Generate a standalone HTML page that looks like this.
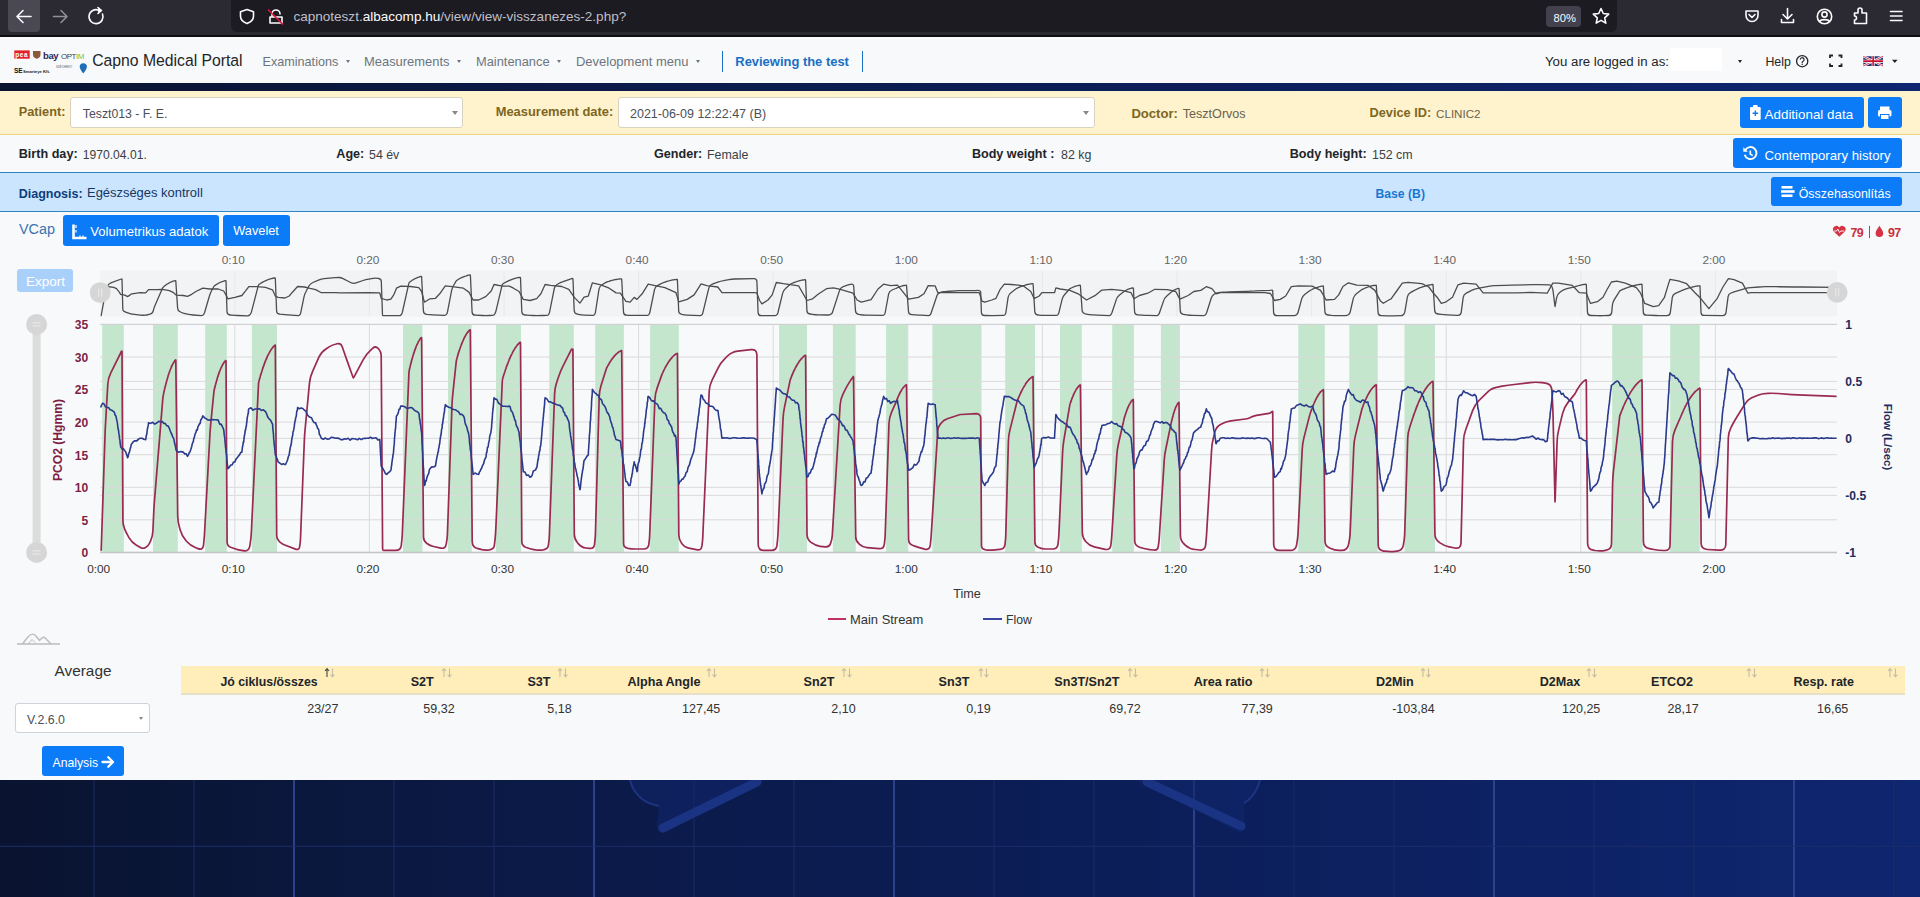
<!DOCTYPE html>
<html><head><meta charset="utf-8"><title>Capno Medical Portal</title>
<style>
html,body{margin:0;padding:0;}
body{width:1920px;height:897px;position:relative;overflow:hidden;background:#0b1838;font-family:"Liberation Sans", sans-serif;}
.t{position:absolute;white-space:nowrap;line-height:1;}
</style></head><body>
<div style="position:absolute;left:0px;top:0px;width:1920px;height:36px;background:#2b2a33;"></div>
<div style="position:absolute;left:0px;top:35px;width:1920px;height:2px;background:#0f0f12;"></div>
<div style="position:absolute;left:8px;top:0px;width:32px;height:32px;background:#4a4953;border-radius:0 0 4px 4px;"></div>
<div style="position:absolute;left:231px;top:0px;width:1386px;height:31.5px;background:#1c1b22;border-radius:0 0 6px 6px;"></div>
<div style="position:absolute;left:1546px;top:6px;width:35px;height:21px;background:#42414d;border-radius:4px;"></div>
<svg style="position:absolute;left:0;top:0" width="1920" height="36" viewBox="0 0 1920 36">
<g fill="none" stroke="#fbfbfe" stroke-width="1.6" stroke-linecap="round" stroke-linejoin="round">
<path d="M31 16.5H17.5M23 10.5l-6 6 6 6"/>
<path d="M67 16.5H53.5M61 10.5l6 6-6 6" stroke="#8f8f9d"/>
<path d="M102.5 14A7 7 0 1 1 99 10.3"/><path d="M98 7.5l3.5 3-3.5 3" fill="#fbfbfe"/>
<path d="M247 9.5l6.5 2.3v4.5c0 3.5-3 6-6.5 7.3-3.5-1.3-6.5-3.8-6.5-7.3v-4.5z"/>
<path d="M270 17h12v6h-12z M272 17v-3a4 4 0 0 1 8 0"/>
<path d="M1601 8.5l2.3 5 5.4.6-4 3.7 1.1 5.3-4.8-2.7-4.8 2.7 1.1-5.3-4-3.7 5.4-.6z"/>
<path d="M1746 11h12v4.5a6 6 0 0 1-12 0z M1749 14.5l3 3 3-3"/>
<path d="M1787.5 8.5v10M1783 14.5l4.5 4.5 4.5-4.5M1781.5 19.5v3h12v-3"/>
<circle cx="1824.5" cy="16.5" r="7.2"/><circle cx="1824.5" cy="14.5" r="2.6"/><path d="M1819.5 21.5c1.5-2.5 8.5-2.5 10 0"/>
<path d="M1854.5 13h3.5v-3a2 2 0 0 1 4 0v3h4.5v10.5h-12v-3.5a2 2 0 0 0 0-4z"/>
<path d="M1890.5 11.5h11.5M1890.5 16h11.5M1890.5 20.5h11.5"/>
</g>
<path d="M268 9.5l15 15" stroke="#e3173e" stroke-width="1.6"/>
</svg>
<div class="t" style="left:293.4px;top:10.2px;font-size:13.55px;color:#bfbfc9;">capnoteszt.<span style="color:#fbfbfe">albacomp.hu</span>/view/view-visszanezes-2.php?</div>
<div class="t" style="left:1553.50px;top:12.82px;font-size:11.2px;font-weight:400;color:#fbfbfe;">80%</div>
<div style="position:absolute;left:0px;top:37px;width:1920px;height:46px;background:#f8f9fa;"></div>
<svg style="position:absolute;left:12px;top:48px" width="80" height="28" viewBox="12 48 80 28">
<rect x="14.3" y="50.4" width="15.4" height="8.3" fill="#e3202a"/>
<text x="15.3" y="57.0" font-family="Liberation Sans" font-weight="700" font-size="6.4" fill="#fff" letter-spacing="0.6">pea</text>
<path d="M33 51h7.5v4c0 2-2 3.5-3.75 3.8-1.75-.3-3.75-1.8-3.75-3.8z" fill="#8a5a3a"/>
<text x="43" y="58.6" font-family="Liberation Sans" font-weight="700" font-size="9.5" fill="#2a2a5a" letter-spacing="-0.4">bay</text>
<text x="61" y="58.5" font-family="Liberation Sans" font-size="8" fill="#444" letter-spacing="-0.5">OPT<tspan fill="#7cc242">IM</tspan></text>
<text x="14" y="73" font-family="Liberation Sans" font-weight="700" font-size="6.5" fill="#111">SE</text>
<text x="23" y="72.6" font-family="Liberation Sans" font-weight="700" font-size="4.2" fill="#222">Smarteye Kft.</text>
<text x="56" y="68" font-family="Liberation Sans" font-size="2.8" fill="#555">SZÉCHENYI</text>
<path d="M83.3 63.2a3.6 3.6 0 0 1 3.6 3.6c0 2.5-3.6 6.7-3.6 6.7s-3.6-4.2-3.6-6.7a3.6 3.6 0 0 1 3.6-3.6z" fill="#1f6fb8"/>
</svg>
<div class="t" style="left:92.20px;top:53.48px;font-size:15.74px;font-weight:400;color:#212529;">Capno Medical Portal</div>
<div class="t" style="left:262.50px;top:55.91px;font-size:12.63px;font-weight:400;color:#6c757d;">Examinations</div>
<div style="position:absolute;left:345.6px;top:59.8px;width:0;height:0;border-left:2.6px solid transparent;border-right:2.6px solid transparent;border-top:3.2px solid #6c757d"></div>
<div class="t" style="left:364.00px;top:55.65px;font-size:12.93px;font-weight:400;color:#6c757d;">Measurements</div>
<div style="position:absolute;left:456.6px;top:59.8px;width:0;height:0;border-left:2.6px solid transparent;border-right:2.6px solid transparent;border-top:3.2px solid #6c757d"></div>
<div class="t" style="left:476.00px;top:55.72px;font-size:12.85px;font-weight:400;color:#6c757d;">Maintenance</div>
<div style="position:absolute;left:556.7px;top:59.8px;width:0;height:0;border-left:2.6px solid transparent;border-right:2.6px solid transparent;border-top:3.2px solid #6c757d"></div>
<div class="t" style="left:576.00px;top:55.62px;font-size:12.97px;font-weight:400;color:#6c757d;">Development menu</div>
<div style="position:absolute;left:695.6px;top:59.8px;width:0;height:0;border-left:2.6px solid transparent;border-right:2.6px solid transparent;border-top:3.2px solid #6c757d"></div>
<div style="position:absolute;left:721.5px;top:51px;width:1.5px;height:21px;background:#1a73c8;"></div>
<div class="t" style="left:735.30px;top:55.64px;font-size:12.95px;font-weight:700;color:#1a6fc4;">Reviewing the test</div>
<div style="position:absolute;left:861.5px;top:51px;width:1.5px;height:21px;background:#1a73c8;"></div>
<div class="t" style="left:1545.00px;top:55.38px;font-size:13.25px;font-weight:400;color:#212529;">You are logged in as:</div>
<div style="position:absolute;left:1670px;top:48.3px;width:52px;height:22.900000000000006px;background:#ffffff;"></div>
<div style="position:absolute;left:1737.5px;top:59.8px;width:0;height:0;border-left:2.8px solid transparent;border-right:2.8px solid transparent;border-top:3.3px solid #212529"></div>
<div class="t" style="left:1765.40px;top:56.15px;font-size:12.35px;font-weight:400;color:#212529;">Help</div>
<svg style="position:absolute;left:1790px;top:50px" width="130" height="24" viewBox="1790 50 130 24">
<circle cx="1802.2" cy="61.2" r="5.6" fill="none" stroke="#212529" stroke-width="1.3"/>
<path d="M1800.3 59.6a1.9 1.9 0 1 1 2.8 1.7c-.6.3-.9.7-.9 1.3v.5" fill="none" stroke="#212529" stroke-width="1.2"/>
<circle cx="1802.2" cy="64.3" r=".75" fill="#212529"/>
<path d="M1830 58v-2.5h3M1838.5 55.5h3v2.5M1841.5 63.5v2.5h-3M1833 66h-3v-2.5" fill="none" stroke="#212529" stroke-width="1.8"/>
<rect x="1863.3" y="56.3" width="19.7" height="9.7" fill="#1d2f6e"/>
<path d="M1863.3 56.3l19.7 9.7M1883 56.3l-19.7 9.7" stroke="#fff" stroke-width="2.2"/>
<path d="M1863.3 56.3l19.7 9.7M1883 56.3l-19.7 9.7" stroke="#c8102e" stroke-width="0.8"/>
<path d="M1873.15 56.3v9.7M1863.3 61.15h19.7" stroke="#fff" stroke-width="3"/>
<path d="M1873.15 56.3v9.7M1863.3 61.15h19.7" stroke="#c8102e" stroke-width="1.6"/>
<path d="M1892 59.8h5.6l-2.8 3.3z" fill="#212529"/>
</svg>
<svg style="position:absolute;left:0;top:83px" width="1920" height="8" viewBox="0 83 1920 8" preserveAspectRatio="none"><defs><linearGradient id="sg" x1="0" y1="0" x2="1" y2="0"><stop offset="0" stop-color="#0a1430"/><stop offset="0.3" stop-color="#0b1a48"/><stop offset="0.65" stop-color="#0c1f5c"/><stop offset="1" stop-color="#0f2670"/></linearGradient></defs><rect x="0" y="83" width="1920" height="8" fill="url(#sg)"/></svg>
<div style="position:absolute;left:0px;top:91px;width:1920px;height:43px;background:#fff3cd;"></div>
<div style="position:absolute;left:0px;top:134px;width:1920px;height:1.1999999999999886px;background:#f1d486;"></div>
<div class="t" style="left:18.70px;top:105.80px;font-size:12.76px;font-weight:700;color:#7d6622;">Patient:</div>
<div style="position:absolute;left:70.3px;top:97.3px;width:393.2px;height:30.299999999999997px;background:#ffffff;border:1px solid #d8d2c0;border-radius:3px;box-sizing:border-box;"></div>
<div class="t" style="left:82.80px;top:108.20px;font-size:12.29px;font-weight:400;color:#495057;">Teszt013 - F. E.</div>
<div style="position:absolute;left:452px;top:111px;width:0;height:0;border-left:3px solid transparent;border-right:3px solid transparent;border-top:4px solid #888"></div>
<div class="t" style="left:495.70px;top:105.67px;font-size:12.91px;font-weight:700;color:#7d6622;">Measurement date:</div>
<div style="position:absolute;left:618px;top:97.3px;width:476.5px;height:30.299999999999997px;background:#ffffff;border:1px solid #d8d2c0;border-radius:3px;box-sizing:border-box;"></div>
<div class="t" style="left:630.00px;top:108.01px;font-size:12.51px;font-weight:400;color:#495057;">2021-06-09 12:22:47 (B)</div>
<div style="position:absolute;left:1083px;top:111px;width:0;height:0;border-left:3px solid transparent;border-right:3px solid transparent;border-top:4px solid #888"></div>
<div class="t" style="left:1131.40px;top:107.23px;font-size:13.08px;font-weight:700;color:#7d6622;">Doctor:</div>
<div class="t" style="left:1182.70px;top:107.63px;font-size:12.6px;font-weight:400;color:#686250;">TesztOrvos</div>
<div class="t" style="left:1369.50px;top:107.48px;font-size:12.78px;font-weight:700;color:#7d6622;">Device ID:</div>
<div class="t" style="left:1436.10px;top:108.50px;font-size:11.58px;font-weight:400;color:#686250;">CLINIC2</div>
<div style="position:absolute;left:1740.2px;top:97.2px;width:123.59999999999991px;height:30.39999999999999px;background:#0b7bf7;border-radius:3px;"></div>
<div class="t" style="left:1764.60px;top:107.77px;font-size:13.38px;font-weight:400;color:#fff;">Additional data</div>
<div style="position:absolute;left:1868.2px;top:97.2px;width:33.700000000000045px;height:30.39999999999999px;background:#0b7bf7;border-radius:3px;"></div>
<svg style="position:absolute;left:1740px;top:95px" width="170" height="36" viewBox="1740 95 170 36">
<rect x="1750" y="107" width="10.7" height="13" rx="1.2" fill="#fff"/><rect x="1753" y="105" width="4.7" height="3.5" rx="1" fill="#fff"/>
<path d="M1755.35 110.5v5.5M1752.6 113.25h5.5" stroke="#0b7bf7" stroke-width="1.4"/>
<rect x="1880" y="106.5" width="9.5" height="4" fill="#fff"/><rect x="1878" y="110" width="13.5" height="6.5" rx="1.5" fill="#fff"/><rect x="1880.5" y="114.5" width="8.5" height="5" fill="#fff" stroke="#0b7bf7" stroke-width="1"/>
</svg>
<div style="position:absolute;left:0px;top:135px;width:1920px;height:37px;background:#f8f9fa;"></div>
<div style="position:absolute;left:0px;top:171.6px;width:1920px;height:1.200000000000017px;background:#2f86c4;"></div>
<div class="t" style="left:18.70px;top:148.40px;font-size:12.64px;font-weight:700;color:#212529;">Birth day:</div>
<div class="t" style="left:82.80px;top:148.85px;font-size:12.11px;font-weight:400;color:#3a3f44;">1970.04.01.</div>
<div class="t" style="left:336.30px;top:148.43px;font-size:12.6px;font-weight:700;color:#212529;">Age:</div>
<div class="t" style="left:369.00px;top:148.60px;font-size:12.4px;font-weight:400;color:#3a3f44;">54 év</div>
<div class="t" style="left:654.00px;top:148.43px;font-size:12.6px;font-weight:700;color:#212529;">Gender:</div>
<div class="t" style="left:707.00px;top:148.60px;font-size:12.4px;font-weight:400;color:#3a3f44;">Female</div>
<div class="t" style="left:971.90px;top:148.43px;font-size:12.6px;font-weight:700;color:#212529;">Body weight :</div>
<div class="t" style="left:1061.00px;top:148.60px;font-size:12.4px;font-weight:400;color:#3a3f44;">82 kg</div>
<div class="t" style="left:1289.70px;top:148.43px;font-size:12.6px;font-weight:700;color:#212529;">Body height:</div>
<div class="t" style="left:1372.00px;top:148.60px;font-size:12.4px;font-weight:400;color:#3a3f44;">152 cm</div>
<div style="position:absolute;left:1733.2px;top:138.1px;width:168.70000000000005px;height:30.400000000000006px;background:#0b7bf7;border-radius:3px;"></div>
<div class="t" style="left:1764.60px;top:149.24px;font-size:13.18px;font-weight:400;color:#fff;">Contemporary history</div>
<svg style="position:absolute;left:1740px;top:143px" width="20" height="20" viewBox="1740 143 20 20">
<path d="M1745.2 150.2a6 6 0 1 1 -0.5 4.5" fill="none" stroke="#fff" stroke-width="1.9"/>
<path d="M1743.3 147.2v4.6h4.6z" fill="#fff"/>
<path d="M1750.3 150.5v3.5l2.4 1.6" fill="none" stroke="#fff" stroke-width="1.7"/>
</svg>
<div style="position:absolute;left:0px;top:172.5px;width:1920px;height:38.5px;background:#cce5ff;"></div>
<div style="position:absolute;left:0px;top:210.8px;width:1920px;height:1.1999999999999886px;background:#2f86c4;"></div>
<div class="t" style="left:18.70px;top:187.70px;font-size:12.52px;font-weight:700;color:#0b3d7a;">Diagnosis:</div>
<div class="t" style="left:87.00px;top:187.35px;font-size:12.94px;font-weight:400;color:#14375f;">Egészséges kontroll</div>
<div class="t" style="left:1375.50px;top:187.97px;font-size:12.2px;font-weight:700;color:#1877d2;">Base (B)</div>
<div style="position:absolute;left:1771.1px;top:177.4px;width:130.80000000000018px;height:29.0px;background:#0b7bf7;border-radius:3px;"></div>
<div class="t" style="left:1798.70px;top:188.47px;font-size:12.44px;font-weight:400;color:#fff;">Összehasonlítás</div>
<svg style="position:absolute;left:1780px;top:183px" width="16" height="18" viewBox="1780 183 16 18">
<rect x="1781.5" y="186" width="11" height="2.6" fill="#fff"/><rect x="1781" y="190.2" width="13.6" height="2.6" fill="#fff"/><rect x="1781.5" y="194.4" width="11" height="2.6" fill="#fff"/>
</svg>
<div style="position:absolute;left:0px;top:212px;width:1920px;height:568px;background:#f8f9fa;"></div>
<div class="t" style="left:19.00px;top:221.72px;font-size:14.39px;font-weight:400;color:#3d74b0;">VCap</div>
<div style="position:absolute;left:63.3px;top:215.2px;width:155.5px;height:30.400000000000006px;background:#0b7bf7;border-radius:3px;"></div>
<svg style="position:absolute;left:70px;top:222px" width="20" height="18" viewBox="70 222 20 18">
<path d="M73.5 224.5v13.5h13" fill="none" stroke="#fff" stroke-width="2.6"/>
<path d="M76 225v3M76 230v2.5M80 235.5v2M83 235.5v2" stroke="#fff" stroke-width="1.2"/>
</svg>
<div class="t" style="left:90.30px;top:224.91px;font-size:13.1px;font-weight:400;color:#fff;">Volumetrikus adatok</div>
<div style="position:absolute;left:223.1px;top:215.2px;width:66.70000000000002px;height:30.400000000000006px;background:#0b7bf7;border-radius:3px;"></div>
<div class="t" style="left:233.30px;top:225.21px;font-size:12.75px;font-weight:400;color:#fff;">Wavelet</div>
<svg style="position:absolute;left:1830px;top:222px" width="60" height="18" viewBox="1830 222 60 18">
<path d="M1839.3 236.8l-5.6-5.4a3.3 3.3 0 0 1 5.6-4 3.3 3.3 0 0 1 5.6 4z" fill="#d63344"/>
<path d="M1834 231h2.5l1.3-2 1.7 3.6 1.3-1.6h3.5" fill="none" stroke="#fff" stroke-width="0.9"/>
<path d="M1879.4 225.8c-1.5 2.6-3.8 5.2-3.8 7.4a3.8 3.8 0 0 0 7.6 0c0-2.2-2.3-4.8-3.8-7.4z" fill="#d63344"/>
</svg>
<div class="t" style="left:1850.50px;top:226.60px;font-size:12.4px;font-weight:700;color:#c9303f;letter-spacing:-0.6px;">79</div>
<div style="position:absolute;left:1868.8px;top:226px;width:1.1000000000001364px;height:12px;background:#666;"></div>
<div class="t" style="left:1888.00px;top:226.60px;font-size:12.4px;font-weight:700;color:#c9303f;letter-spacing:-0.6px;">97</div>
<svg style="position:absolute;left:0;top:240px" width="1920" height="420" viewBox="0 240 1920 420">
<rect x="100.2" y="270.5" width="1736.8" height="46" fill="#f2f3f5"/>
<line x1="234.8" y1="270.5" x2="234.8" y2="316.5" stroke="#e8e8ea" stroke-width="1"/>
<line x1="369.4" y1="270.5" x2="369.4" y2="316.5" stroke="#e8e8ea" stroke-width="1"/>
<line x1="504.0" y1="270.5" x2="504.0" y2="316.5" stroke="#e8e8ea" stroke-width="1"/>
<line x1="638.6" y1="270.5" x2="638.6" y2="316.5" stroke="#e8e8ea" stroke-width="1"/>
<line x1="773.2" y1="270.5" x2="773.2" y2="316.5" stroke="#e8e8ea" stroke-width="1"/>
<line x1="907.8" y1="270.5" x2="907.8" y2="316.5" stroke="#e8e8ea" stroke-width="1"/>
<line x1="1042.4" y1="270.5" x2="1042.4" y2="316.5" stroke="#e8e8ea" stroke-width="1"/>
<line x1="1177.0" y1="270.5" x2="1177.0" y2="316.5" stroke="#e8e8ea" stroke-width="1"/>
<line x1="1311.6" y1="270.5" x2="1311.6" y2="316.5" stroke="#e8e8ea" stroke-width="1"/>
<line x1="1446.2" y1="270.5" x2="1446.2" y2="316.5" stroke="#e8e8ea" stroke-width="1"/>
<line x1="1580.8" y1="270.5" x2="1580.8" y2="316.5" stroke="#e8e8ea" stroke-width="1"/>
<line x1="1715.4" y1="270.5" x2="1715.4" y2="316.5" stroke="#e8e8ea" stroke-width="1"/>
<path d="M100.6 315.6 L100.9 315.6 Q101.1 315.6 101.2 315.4 L104.8 295.9 Q105.3 292.9 106.2 290.0 L107.2 286.8 Q108.1 283.9 110.9 282.9 L121.3 279.0 Q121.5 278.9 121.7 278.9 L121.8 278.9 Q122.0 278.9 122.0 279.2 L122.8 309.2 Q122.9 310.9 124.4 311.6 L124.7 311.7 Q126.2 312.4 127.8 312.9 L129.3 313.4 Q131.8 314.2 134.4 314.4 L140.4 315.1 Q142.9 315.4 145.4 315.1 L146.5 315.0 Q148.5 314.8 150.4 313.9 L150.8 313.8 Q152.7 312.9 153.2 311.0 L153.5 309.8 Q154.1 307.3 155.2 304.9 L162.7 287.8 Q163.0 287.3 163.5 286.9 L163.6 286.8 Q164.1 286.4 164.5 286.0 L164.7 285.9 Q165.1 285.5 165.6 285.2 L165.7 285.1 Q166.2 284.7 166.7 284.4 L166.8 284.3 Q167.3 284.0 167.8 283.7 L167.9 283.7 Q168.3 283.4 168.8 283.1 L168.9 283.0 Q169.4 282.8 169.9 282.5 L170.0 282.5 Q170.5 282.2 171.0 282.0 L171.1 282.0 Q171.5 281.8 172.0 281.6 L172.1 281.5 Q172.6 281.4 173.1 281.2 L173.2 281.2 Q173.7 281.0 174.2 280.9 L174.3 280.8 Q174.7 280.7 175.2 280.6 L175.3 280.6 Q175.8 280.5 175.8 281.0 L177.6 308.1 Q177.8 310.4 179.6 311.5 L180.1 311.8 Q181.9 312.9 184.1 313.4 L187.4 314.1 Q190.3 314.8 193.3 315.0 L201.7 315.6 Q202.8 315.6 203.5 314.7 L203.6 314.5 Q204.2 313.6 204.6 312.5 L209.5 295.8 Q210.4 292.9 211.8 290.3 L213.7 286.8 Q214.0 286.2 214.5 285.9 L214.6 285.8 Q215.1 285.4 215.6 285.1 L215.7 285.0 Q216.2 284.7 216.7 284.3 L216.8 284.3 Q217.3 284.0 217.7 283.7 L217.9 283.6 Q218.3 283.3 218.8 283.1 L219.0 283.0 Q219.4 282.8 219.9 282.5 L220.0 282.5 Q220.5 282.2 221.0 282.0 L221.1 282.0 Q221.6 281.8 222.1 281.6 L222.2 281.6 Q222.7 281.4 223.2 281.3 L223.3 281.2 Q223.8 281.1 224.3 280.9 L224.4 280.9 Q224.9 280.8 225.4 280.7 L225.5 280.7 Q226.0 280.6 226.0 281.1 L227.0 311.8 Q227.1 314.8 230.1 315.0 L231.9 315.1 Q234.9 315.4 237.9 315.5 L247.4 315.8 Q248.8 315.9 249.8 314.8 L250.0 314.6 Q251.0 313.6 251.4 312.1 L258.4 285.2 Q258.6 284.7 259.0 284.4 L259.2 284.3 Q259.6 284.0 260.1 283.7 L260.2 283.6 Q260.7 283.3 261.1 283.1 L261.2 283.0 Q261.7 282.7 262.2 282.4 L262.3 282.4 Q262.8 282.1 263.2 281.9 L263.3 281.8 Q263.8 281.6 264.3 281.3 L264.4 281.3 Q264.8 281.0 265.3 280.8 L265.4 280.8 Q265.9 280.6 266.4 280.4 L266.5 280.3 Q266.9 280.1 267.4 279.9 L267.5 279.9 Q268.0 279.7 268.4 279.5 L268.6 279.5 Q269.0 279.3 269.5 279.2 L269.6 279.1 Q270.1 279.0 270.5 278.8 L270.6 278.8 Q271.1 278.7 271.6 278.5 L271.7 278.5 Q272.2 278.4 272.6 278.3 L272.7 278.2 Q273.2 278.1 273.7 278.0 L273.8 278.0 Q274.2 277.9 274.7 277.9 L274.8 277.8 Q275.3 277.8 275.3 278.2 L276.6 311.0 Q276.7 313.6 279.2 314.0 L279.7 314.1 Q282.3 314.5 284.8 314.6 L298.1 315.6 Q299.0 315.6 299.6 315.0 L299.7 314.8 Q300.4 314.2 300.6 313.3 L303.9 297.4 Q304.5 294.4 305.9 291.8 L308.7 286.3 Q310.1 283.7 312.9 282.5 L318.5 280.2 Q321.3 279.0 324.2 278.7 L329.4 278.1 Q332.4 277.8 335.4 277.6 L338.7 277.5 Q340.8 277.4 342.6 278.4 L343.1 278.6 Q344.9 279.6 346.8 280.5 L350.6 282.5 Q353.3 283.9 356.1 282.9 L363.0 280.5 Q365.8 279.6 368.8 279.1 L373.1 278.3 Q375.6 277.9 378.1 278.4 L378.7 278.5 Q381.2 279.0 381.3 281.6 L382.5 315.1 Q382.6 315.4 382.8 315.5 L382.9 315.5 Q383.1 315.6 383.4 315.6 L399.5 315.6 Q400.7 315.6 401.3 314.7 L401.4 314.5 Q402.1 313.6 402.3 312.5 L408.9 283.2 Q409.0 282.6 409.5 282.3 L409.6 282.2 Q410.1 281.8 410.5 281.5 L410.7 281.4 Q411.1 281.0 411.6 280.7 L411.7 280.6 Q412.2 280.3 412.6 280.0 L412.8 279.9 Q413.2 279.6 413.7 279.4 L413.8 279.3 Q414.3 279.0 414.7 278.8 L414.8 278.7 Q415.3 278.5 415.8 278.3 L415.9 278.2 Q416.3 278.0 416.8 277.8 L416.9 277.8 Q417.4 277.6 417.9 277.4 L418.0 277.4 Q418.4 277.2 418.9 277.0 L419.0 277.0 Q419.5 276.9 419.9 276.7 L420.1 276.7 Q420.5 276.6 421.0 276.5 L421.1 276.5 Q421.6 276.4 421.6 276.9 L423.4 310.9 Q423.5 313.9 426.4 314.3 L427.0 314.4 Q429.9 314.8 432.8 314.9 L444.1 315.3 Q445.3 315.4 446.1 314.6 L446.3 314.4 Q447.2 313.6 447.4 312.4 L451.6 290.7 Q452.2 287.8 453.7 285.2 L456.1 281.1 Q456.4 280.6 456.9 280.3 L457.0 280.2 Q457.5 279.9 458.0 279.6 L458.1 279.5 Q458.5 279.2 459.0 279.0 L459.1 278.9 Q459.6 278.6 460.1 278.4 L460.2 278.3 Q460.7 278.1 461.2 277.8 L461.3 277.8 Q461.8 277.5 462.2 277.3 L462.4 277.3 Q462.8 277.1 463.3 276.9 L463.4 276.8 Q463.9 276.6 464.4 276.5 L464.5 276.4 Q465.0 276.2 465.5 276.1 L465.6 276.1 Q466.0 275.9 466.5 275.8 L466.6 275.7 Q467.1 275.6 467.6 275.5 L467.7 275.4 Q468.2 275.3 468.7 275.2 L468.8 275.2 Q469.3 275.1 469.7 275.0 L469.8 275.0 Q470.3 274.9 470.4 275.4 L472.1 312.1 Q472.3 315.1 475.3 315.2 L482.7 315.5 Q485.7 315.6 488.7 315.5 L492.5 315.4 Q494.0 315.4 494.8 314.0 L494.9 313.7 Q495.7 312.4 496.0 310.9 L502.2 284.7 Q502.4 284.2 502.8 283.9 L502.9 283.8 Q503.4 283.6 503.8 283.3 L503.9 283.2 Q504.4 283.0 504.8 282.7 L504.9 282.7 Q505.4 282.4 505.8 282.2 L505.9 282.1 Q506.4 281.9 506.8 281.6 L507.0 281.6 Q507.4 281.4 507.9 281.1 L508.0 281.1 Q508.4 280.9 508.9 280.7 L509.0 280.6 Q509.4 280.4 509.9 280.2 L510.0 280.2 Q510.4 280.0 510.9 279.8 L511.0 279.8 Q511.4 279.6 511.9 279.4 L512.0 279.4 Q512.4 279.2 512.9 279.1 L513.0 279.0 Q513.4 278.9 513.9 278.7 L514.0 278.7 Q514.4 278.6 514.9 278.4 L515.0 278.4 Q515.5 278.3 515.9 278.2 L516.0 278.1 Q516.5 278.0 516.9 277.9 L517.0 277.9 Q517.5 277.8 517.9 277.7 L518.0 277.7 Q518.5 277.6 518.9 277.5 L519.0 277.5 Q519.5 277.4 519.9 277.3 L520.0 277.3 Q520.5 277.3 520.5 277.7 L521.8 311.8 Q521.9 314.8 524.9 315.0 L527.0 315.1 Q530.0 315.4 533.0 315.5 L536.5 315.6 Q539.5 315.6 542.5 315.5 L546.8 315.4 Q547.9 315.4 548.5 314.6 L548.6 314.4 Q549.3 313.6 549.5 312.5 L554.3 288.5 Q554.8 285.7 557.3 284.3 L557.9 284.0 Q560.4 282.6 563.1 281.7 L571.0 278.8 Q571.5 278.5 572.2 278.5 L572.3 278.5 Q572.9 278.5 573.0 279.2 L574.2 310.6 Q574.3 313.6 577.3 314.2 L578.4 314.4 Q581.3 315.1 584.3 315.1 L592.8 315.3 Q593.8 315.4 594.5 314.6 L594.6 314.4 Q595.2 313.6 595.4 312.5 L599.0 289.2 Q599.4 286.2 602.0 284.7 L606.0 282.4 Q606.4 282.1 606.8 282.0 L606.9 281.9 Q607.4 281.8 607.9 281.6 L608.0 281.6 Q608.4 281.4 608.9 281.3 L609.0 281.3 Q609.4 281.1 609.9 281.0 L610.0 280.9 Q610.5 280.8 610.9 280.7 L611.0 280.7 Q611.5 280.5 611.9 280.4 L612.0 280.4 Q612.5 280.3 613.0 280.2 L613.1 280.1 Q613.5 280.0 614.0 279.9 L614.1 279.9 Q614.5 279.8 615.0 279.7 L615.1 279.7 Q615.6 279.6 616.0 279.5 L616.1 279.5 Q616.6 279.4 617.1 279.3 L617.2 279.3 Q617.6 279.3 618.1 279.2 L618.2 279.2 Q618.6 279.1 619.1 279.1 L619.2 279.0 Q619.7 279.0 620.1 278.9 L620.2 278.9 Q620.7 278.9 621.1 278.8 L621.2 278.8 Q621.7 278.8 621.7 279.3 L623.5 312.1 Q623.7 315.1 626.6 315.2 L628.5 315.3 Q631.5 315.4 634.5 315.4 L647.1 315.4 Q648.2 315.4 648.8 314.6 L648.9 314.4 Q649.6 313.6 649.8 312.5 L654.5 289.7 Q655.1 286.7 657.8 285.4 L661.7 283.4 Q662.1 283.2 662.6 283.0 L662.7 282.9 Q663.1 282.7 663.6 282.6 L663.7 282.5 Q664.1 282.4 664.6 282.2 L664.7 282.1 Q665.2 282.0 665.6 281.8 L665.7 281.8 Q666.2 281.6 666.6 281.5 L666.8 281.5 Q667.2 281.3 667.7 281.2 L667.8 281.1 Q668.2 281.0 668.7 280.9 L668.8 280.9 Q669.3 280.7 669.7 280.6 L669.8 280.6 Q670.3 280.5 670.7 280.4 L670.8 280.3 Q671.3 280.2 671.8 280.1 L671.9 280.1 Q672.3 280.0 672.8 279.9 L672.9 279.9 Q673.3 279.8 673.8 279.8 L673.9 279.7 Q674.4 279.7 674.8 279.6 L674.9 279.6 Q675.4 279.5 675.8 279.5 L675.9 279.5 Q676.4 279.4 676.9 279.4 L677.0 279.4 Q677.4 279.3 677.4 279.8 L678.7 311.0 Q678.8 313.6 681.3 314.2 L681.9 314.4 Q684.4 315.1 687.0 315.2 L700.2 315.6 Q701.1 315.6 701.7 315.0 L701.9 314.8 Q702.5 314.2 702.7 313.3 L708.8 288.1 Q709.5 285.2 712.3 284.2 L717.8 282.1 Q720.6 281.1 723.6 280.6 L728.8 279.6 Q731.8 279.0 734.8 279.0 L753.8 278.6 Q756.8 278.5 756.9 281.5 L758.1 312.6 Q758.2 315.6 761.2 315.6 L775.2 315.6 Q776.3 315.6 777.0 314.7 L777.1 314.5 Q777.7 313.6 778.0 312.5 L782.6 293.3 Q783.3 290.3 785.6 288.4 L789.9 284.5 Q790.3 284.2 790.7 284.0 L790.8 283.9 Q791.3 283.7 791.8 283.5 L791.9 283.4 Q792.3 283.2 792.8 283.0 L792.9 283.0 Q793.3 282.8 793.8 282.6 L793.9 282.6 Q794.4 282.4 794.8 282.2 L794.9 282.2 Q795.4 282.0 795.8 281.9 L795.9 281.8 Q796.4 281.7 796.9 281.5 L797.0 281.5 Q797.4 281.3 797.9 281.2 L798.0 281.2 Q798.4 281.0 798.9 280.9 L799.0 280.9 Q799.5 280.8 799.9 280.7 L800.0 280.6 Q800.5 280.5 800.9 280.4 L801.1 280.4 Q801.5 280.3 802.0 280.2 L802.1 280.2 Q802.5 280.1 803.0 280.0 L803.1 280.0 Q803.6 279.9 804.0 279.9 L804.1 279.8 Q804.6 279.8 805.0 279.7 L805.1 279.7 Q805.6 279.7 805.6 280.1 L806.9 310.6 Q807.0 313.6 810.0 314.0 L812.4 314.3 Q815.3 314.8 818.3 314.8 L827.9 315.0 Q829.3 315.1 830.5 314.4 L830.8 314.2 Q832.1 313.6 832.5 312.2 L839.5 290.6 Q840.4 287.8 843.2 286.7 L844.7 286.2 Q847.4 285.2 850.1 284.4 L850.8 284.3 Q853.5 283.5 853.7 286.4 L855.5 310.9 Q855.7 313.9 858.7 314.4 L859.8 314.6 Q862.7 315.1 865.7 315.1 L882.6 315.4 Q883.6 315.4 884.2 314.6 L884.4 314.4 Q885.0 313.6 885.2 312.5 L888.6 294.1 Q889.2 291.1 892.0 290.0 L895.7 288.5 Q896.1 288.3 896.6 288.1 L896.7 288.0 Q897.2 287.8 897.6 287.6 L897.8 287.5 Q898.2 287.3 898.7 287.1 L898.8 287.1 Q899.2 286.9 899.7 286.7 L899.8 286.7 Q900.3 286.5 900.7 286.4 L900.8 286.3 Q901.3 286.2 901.8 286.0 L901.9 286.0 Q902.3 285.9 902.8 285.8 L902.9 285.7 Q903.4 285.6 903.8 285.5 L903.9 285.5 Q904.4 285.4 904.9 285.3 L905.0 285.3 Q905.4 285.2 905.9 285.2 L906.0 285.2 Q906.5 285.1 906.5 285.6 L908.5 311.5 Q908.7 314.5 911.7 314.7 L915.4 314.9 Q918.4 315.1 921.4 315.2 L928.5 315.6 Q929.6 315.6 930.2 314.7 L930.4 314.5 Q931.0 313.6 931.3 312.5 L937.1 295.3 Q937.9 292.9 940.5 292.3 L941.0 292.2 Q943.5 291.6 946.1 291.5 L959.4 290.6 Q960.0 290.6 960.5 290.6 L960.6 290.6 Q961.1 290.6 961.7 290.6 L976.6 290.5 Q977.9 290.4 979.1 290.6 L979.4 290.7 Q980.6 290.9 980.7 292.1 L981.4 312.4 Q981.5 315.4 984.5 315.5 L986.0 315.5 Q989.0 315.6 992.0 315.6 L1003.3 315.4 Q1004.3 315.4 1005.0 314.6 L1005.1 314.4 Q1005.7 313.6 1005.9 312.5 L1008.1 297.4 Q1008.5 294.4 1010.9 292.7 L1016.5 288.6 Q1016.9 288.3 1017.3 288.1 L1017.4 288.0 Q1017.9 287.8 1018.3 287.6 L1018.4 287.6 Q1018.9 287.4 1019.3 287.2 L1019.5 287.1 Q1019.9 286.9 1020.4 286.8 L1020.5 286.7 Q1020.9 286.5 1021.4 286.4 L1021.5 286.3 Q1021.9 286.2 1022.4 286.0 L1022.5 286.0 Q1022.9 285.8 1023.4 285.6 L1023.5 285.6 Q1023.9 285.5 1024.4 285.3 L1024.5 285.3 Q1025.0 285.2 1025.4 285.0 L1025.5 285.0 Q1026.0 284.9 1026.4 284.8 L1026.5 284.7 Q1027.0 284.6 1027.4 284.5 L1027.5 284.5 Q1028.0 284.4 1028.4 284.3 L1028.5 284.3 Q1029.0 284.2 1029.4 284.1 L1029.5 284.1 Q1030.0 284.0 1030.5 283.9 L1030.6 283.9 Q1031.0 283.8 1031.5 283.8 L1031.6 283.7 Q1032.0 283.7 1032.5 283.6 L1032.6 283.6 Q1033.0 283.6 1033.1 284.0 L1034.8 311.8 Q1035.0 314.8 1038.0 315.0 L1039.0 315.1 Q1041.9 315.4 1044.9 315.4 L1056.2 315.4 Q1057.3 315.4 1057.9 314.6 L1058.0 314.4 Q1058.7 313.6 1058.9 312.6 L1062.1 299.4 Q1062.8 296.5 1064.9 294.3 L1069.4 289.2 Q1069.8 288.8 1070.3 288.5 L1070.4 288.5 Q1070.9 288.2 1071.3 288.0 L1071.5 287.9 Q1071.9 287.7 1072.4 287.5 L1072.5 287.4 Q1073.0 287.2 1073.5 287.0 L1073.6 286.9 Q1074.0 286.7 1074.5 286.6 L1074.6 286.5 Q1075.1 286.4 1075.6 286.2 L1075.7 286.2 Q1076.2 286.0 1076.6 285.9 L1076.8 285.8 Q1077.2 285.7 1077.7 285.6 L1077.8 285.6 Q1078.3 285.5 1078.8 285.4 L1078.9 285.3 Q1079.3 285.3 1079.8 285.2 L1079.9 285.2 Q1080.4 285.1 1080.4 285.6 L1082.1 310.3 Q1082.3 313.2 1085.3 313.9 L1086.4 314.1 Q1089.3 314.8 1092.3 314.9 L1109.1 315.6 Q1110.2 315.6 1110.8 314.7 L1111.0 314.5 Q1111.6 313.6 1112.0 312.5 L1116.2 299.9 Q1117.2 297.0 1119.5 295.1 L1123.7 291.7 Q1124.1 291.4 1124.6 291.1 L1124.7 291.0 Q1125.2 290.7 1125.6 290.5 L1125.7 290.4 Q1126.2 290.2 1126.6 289.9 L1126.8 289.9 Q1127.2 289.6 1127.7 289.4 L1127.8 289.4 Q1128.2 289.2 1128.7 289.0 L1128.8 289.0 Q1129.3 288.8 1129.7 288.6 L1129.8 288.6 Q1130.3 288.5 1130.7 288.3 L1130.8 288.3 Q1131.3 288.2 1131.8 288.1 L1131.9 288.0 Q1132.3 287.9 1132.8 287.9 L1132.9 287.8 Q1133.3 287.8 1133.4 288.2 L1134.6 311.8 Q1134.7 314.8 1137.7 314.9 L1142.0 315.2 Q1145.0 315.4 1148.0 315.4 L1156.7 315.6 Q1157.6 315.6 1158.2 315.0 L1158.3 314.8 Q1159.0 314.2 1159.3 313.3 L1163.6 300.9 Q1164.5 298.0 1166.8 296.1 L1171.1 292.3 Q1171.5 291.9 1172.0 291.5 L1172.1 291.4 Q1172.6 291.1 1173.1 290.8 L1173.2 290.7 Q1173.7 290.4 1174.1 290.1 L1174.3 290.0 Q1174.7 289.8 1175.2 289.5 L1175.3 289.5 Q1175.8 289.3 1176.3 289.1 L1176.4 289.0 Q1176.9 288.8 1177.4 288.7 L1177.5 288.7 Q1178.0 288.5 1178.4 288.4 L1178.5 288.4 Q1179.0 288.3 1179.1 288.8 L1180.3 310.9 Q1180.4 313.9 1183.4 314.3 L1186.7 314.9 Q1189.6 315.4 1192.6 315.4 L1203.8 315.6 Q1204.9 315.6 1205.6 314.7 L1205.7 314.5 Q1206.3 313.6 1206.7 312.5 L1211.2 298.2 Q1211.9 296.0 1213.8 294.6 L1214.2 294.3 Q1216.1 292.9 1218.4 292.7 L1222.9 292.2 Q1225.8 291.9 1228.8 291.8 L1245.6 291.4 Q1248.1 291.4 1250.6 291.1 L1251.2 291.1 Q1253.7 290.9 1256.2 290.8 L1269.4 290.4 Q1270.4 290.3 1271.4 290.2 L1271.6 290.1 Q1272.7 289.9 1272.7 290.9 L1273.6 312.6 Q1273.8 315.6 1276.8 315.6 L1294.1 315.6 Q1295.5 315.6 1296.5 314.7 L1296.7 314.5 Q1297.7 313.6 1298.1 312.2 L1301.7 298.9 Q1302.5 296.0 1304.9 294.2 L1309.0 291.2 Q1309.4 290.9 1309.9 290.6 L1310.0 290.5 Q1310.5 290.3 1311.0 290.0 L1311.1 289.9 Q1311.6 289.7 1312.1 289.5 L1312.2 289.4 Q1312.6 289.2 1313.1 288.9 L1313.2 288.9 Q1313.7 288.7 1314.2 288.5 L1314.3 288.4 Q1314.8 288.2 1315.3 288.0 L1315.4 288.0 Q1315.9 287.8 1316.3 287.6 L1316.5 287.6 Q1316.9 287.4 1317.4 287.3 L1317.5 287.3 Q1318.0 287.1 1318.5 287.0 L1318.6 286.9 Q1319.1 286.8 1319.6 286.7 L1319.7 286.7 Q1320.1 286.5 1320.6 286.4 L1320.7 286.4 Q1321.2 286.3 1321.7 286.2 L1321.8 286.2 Q1322.3 286.1 1322.8 286.1 L1322.9 286.0 Q1323.4 286.0 1323.4 286.5 L1324.9 311.8 Q1325.0 314.8 1328.0 315.0 L1331.5 315.4 Q1334.5 315.6 1337.5 315.6 L1345.5 315.6 Q1347.0 315.6 1348.3 314.7 L1348.6 314.5 Q1349.8 313.6 1350.2 312.0 L1353.3 298.4 Q1354.0 295.5 1356.4 293.7 L1361.9 289.6 Q1362.4 289.3 1362.9 289.1 L1363.0 289.0 Q1363.4 288.8 1363.9 288.6 L1364.0 288.5 Q1364.5 288.3 1365.0 288.1 L1365.1 288.1 Q1365.6 287.9 1366.1 287.7 L1366.2 287.6 Q1366.7 287.4 1367.1 287.3 L1367.3 287.2 Q1367.7 287.0 1368.2 286.9 L1368.3 286.8 Q1368.8 286.7 1369.3 286.5 L1369.4 286.5 Q1369.9 286.4 1370.4 286.2 L1370.5 286.2 Q1370.9 286.1 1371.4 286.0 L1371.5 285.9 Q1372.0 285.8 1372.5 285.7 L1372.6 285.7 Q1373.1 285.6 1373.6 285.5 L1373.7 285.5 Q1374.2 285.4 1374.6 285.3 L1374.8 285.3 Q1375.2 285.2 1375.7 285.2 L1375.8 285.2 Q1376.3 285.1 1376.3 285.6 L1378.1 312.6 Q1378.3 315.6 1381.3 315.7 L1387.0 315.8 Q1390.0 315.9 1393.0 315.8 L1400.9 315.7 Q1402.3 315.7 1403.3 314.7 L1403.5 314.5 Q1404.5 313.6 1404.8 312.2 L1407.4 296.8 Q1407.9 293.9 1410.4 292.6 L1413.0 291.1 Q1413.4 290.9 1413.9 290.6 L1414.0 290.6 Q1414.5 290.3 1414.9 290.1 L1415.0 290.0 Q1415.5 289.8 1416.0 289.6 L1416.1 289.5 Q1416.5 289.3 1417.0 289.1 L1417.1 289.0 Q1417.6 288.8 1418.0 288.6 L1418.1 288.6 Q1418.6 288.4 1419.0 288.2 L1419.2 288.1 Q1419.6 287.9 1420.1 287.7 L1420.2 287.7 Q1420.6 287.5 1421.1 287.4 L1421.2 287.3 Q1421.7 287.1 1422.1 287.0 L1422.2 286.9 Q1422.7 286.8 1423.2 286.6 L1423.3 286.6 Q1423.7 286.4 1424.2 286.3 L1424.3 286.3 Q1424.7 286.1 1425.2 286.0 L1425.3 286.0 Q1425.8 285.8 1426.2 285.7 L1426.3 285.7 Q1426.8 285.6 1427.3 285.5 L1427.4 285.4 Q1427.8 285.3 1428.3 285.2 L1428.4 285.2 Q1428.9 285.1 1429.3 285.0 L1429.4 285.0 Q1429.9 284.9 1430.3 284.8 L1430.4 284.8 Q1430.9 284.7 1431.4 284.7 L1431.5 284.6 Q1431.9 284.6 1432.4 284.5 L1432.5 284.5 Q1433.0 284.4 1433.0 284.9 L1434.7 310.6 Q1434.9 313.6 1437.9 314.0 L1441.1 314.4 Q1444.1 314.8 1447.1 314.9 L1457.8 315.3 Q1460.8 315.4 1461.2 312.4 L1463.2 297.4 Q1463.6 294.5 1466.3 293.1 L1472.1 290.2 Q1474.8 288.8 1477.7 288.3 L1488.5 286.3 Q1491.5 285.7 1494.5 285.6 L1505.2 285.3 Q1508.2 285.2 1511.2 285.1 L1533.1 284.7 Q1536.1 284.6 1539.1 284.7 L1549.4 284.9 Q1551.4 285.0 1552.1 286.9 L1552.2 287.4 Q1552.8 289.3 1553.1 291.4 L1555.0 306.3 Q1555.1 306.8 1555.1 306.3 L1556.7 297.4 Q1557.3 294.5 1559.7 292.6 L1561.6 291.1 Q1564.0 289.3 1566.9 288.6 L1574.6 286.9 Q1575.1 286.8 1575.6 286.6 L1575.7 286.5 Q1576.1 286.4 1576.6 286.2 L1576.7 286.2 Q1577.1 286.0 1577.6 285.9 L1577.7 285.9 Q1578.2 285.7 1578.6 285.6 L1578.7 285.6 Q1579.2 285.4 1579.6 285.3 L1579.7 285.3 Q1580.2 285.2 1580.6 285.1 L1580.8 285.0 Q1581.2 284.9 1581.7 284.8 L1581.8 284.8 Q1582.2 284.7 1582.7 284.7 L1582.8 284.6 Q1583.2 284.6 1583.7 284.5 L1583.8 284.5 Q1584.2 284.4 1584.7 284.3 L1584.8 284.3 Q1585.3 284.3 1585.7 284.2 L1585.8 284.2 Q1586.3 284.2 1586.3 284.6 L1587.5 312.4 Q1587.7 315.4 1590.7 315.5 L1597.2 315.7 Q1600.2 315.8 1603.2 315.7 L1608.4 315.5 Q1611.4 315.4 1611.7 312.4 L1612.4 305.1 Q1612.8 302.2 1614.3 299.6 L1619.5 291.3 Q1619.7 290.9 1620.2 290.6 L1620.3 290.6 Q1620.7 290.4 1621.2 290.2 L1621.3 290.1 Q1621.7 289.9 1622.2 289.7 L1622.3 289.6 Q1622.8 289.4 1623.2 289.2 L1623.3 289.2 Q1623.8 289.0 1624.2 288.8 L1624.3 288.8 Q1624.8 288.6 1625.2 288.4 L1625.3 288.4 Q1625.8 288.2 1626.3 288.0 L1626.4 288.0 Q1626.8 287.8 1627.3 287.6 L1627.4 287.6 Q1627.8 287.4 1628.3 287.3 L1628.4 287.2 Q1628.8 287.1 1629.3 286.9 L1629.4 286.9 Q1629.9 286.8 1630.3 286.6 L1630.4 286.6 Q1630.9 286.4 1631.3 286.3 L1631.4 286.3 Q1631.9 286.1 1632.3 286.0 L1632.4 286.0 Q1632.9 285.9 1633.4 285.8 L1633.5 285.7 Q1633.9 285.6 1634.4 285.5 L1634.5 285.5 Q1634.9 285.4 1635.4 285.3 L1635.5 285.2 Q1635.9 285.1 1636.4 285.1 L1636.5 285.0 Q1637.0 284.9 1637.4 284.9 L1637.5 284.8 Q1638.0 284.8 1638.4 284.7 L1638.5 284.7 Q1639.0 284.6 1639.4 284.5 L1639.5 284.5 Q1640.0 284.4 1640.4 284.4 L1640.6 284.4 Q1641.0 284.3 1641.5 284.2 L1641.6 284.2 Q1642.0 284.2 1642.0 284.6 L1643.3 312.1 Q1643.4 315.1 1646.4 315.2 L1655.7 315.5 Q1658.7 315.7 1661.7 315.7 L1666.9 315.7 Q1669.9 315.7 1670.3 312.7 L1672.3 297.4 Q1672.7 294.5 1675.4 293.3 L1680.6 291.1 Q1681.0 290.9 1681.5 290.7 L1681.6 290.6 Q1682.1 290.4 1682.6 290.2 L1682.7 290.2 Q1683.2 290.0 1683.6 289.8 L1683.7 289.7 Q1684.2 289.5 1684.7 289.4 L1684.8 289.3 Q1685.3 289.1 1685.7 289.0 L1685.8 288.9 Q1686.3 288.8 1686.8 288.6 L1686.9 288.6 Q1687.4 288.4 1687.8 288.3 L1687.9 288.2 Q1688.4 288.1 1688.9 287.9 L1689.0 287.9 Q1689.5 287.8 1689.9 287.6 L1690.1 287.6 Q1690.5 287.5 1691.0 287.3 L1691.1 287.3 Q1691.6 287.2 1692.0 287.1 L1692.2 287.0 Q1692.6 286.9 1693.1 286.8 L1693.2 286.8 Q1693.7 286.7 1694.2 286.6 L1694.3 286.6 Q1694.7 286.5 1695.2 286.4 L1695.3 286.4 Q1695.8 286.3 1696.3 286.2 L1696.4 286.2 Q1696.8 286.1 1697.3 286.1 L1697.4 286.0 Q1697.9 286.0 1698.4 285.9 L1698.5 285.9 Q1698.9 285.8 1699.4 285.8 L1699.5 285.8 Q1700.0 285.7 1700.0 286.2 L1701.0 312.4 Q1701.1 315.4 1704.1 315.4 L1722.6 315.6 Q1725.6 315.7 1726.0 312.7 L1728.1 296.6 Q1728.4 293.9 1730.9 293.0 L1731.5 292.8 Q1734.0 291.9 1736.6 291.1 L1745.1 288.6 Q1747.9 287.8 1750.9 287.6 L1758.9 287.0 Q1761.9 286.8 1764.9 286.7 L1770.0 286.7 Q1773.0 286.7 1776.0 286.7 L1795.1 287.0 Q1798.1 287.0 1801.1 287.0 L1836.6 287.3" fill="none" stroke="#4d4d4d" stroke-width="1.3" stroke-linejoin="round"/>
<path d="M100.6 286.5 L102.5 285.6 L106.7 286.5 L113.7 287.3 L116.5 288.7 L119.3 292.1 L120.6 294.3 L124.8 295.2 L127.6 296.6 L131.8 293.8 L140.2 292.7 L145.7 292.9 L148.5 289.6 L156.9 289.6 L162.4 289.3 L169.4 290.7 L173.6 292.7 L176.4 295.2 L183.3 295.5 L187.5 296.3 L191.7 294.3 L195.9 291.5 L202.8 288.2 L209.8 289.0 L218.2 289.0 L223.7 291.0 L226.5 296.0 L227.9 298.8 L234.9 297.4 L241.9 295.5 L246.0 290.4 L248.8 286.7 L257.2 286.7 L265.5 287.3 L272.5 289.8 L275.3 296.0 L278.1 297.4 L285.0 298.0 L289.2 296.0 L292.0 292.7 L297.6 286.5 L304.5 287.0 L310.1 288.4 L315.7 289.6 L321.3 292.7 L335.2 292.7 L340.8 292.9 L368.6 292.7 L379.8 292.9 L381.2 298.3 L386.7 300.0 L390.9 299.1 L393.7 294.9 L396.5 288.2 L400.7 286.2 L410.4 286.5 L418.8 287.6 L421.6 291.5 L424.4 302.2 L429.9 298.8 L435.5 298.3 L439.7 293.8 L445.3 285.9 L452.2 286.7 L463.4 288.2 L468.9 292.1 L473.1 300.0 L478.7 300.0 L485.7 296.6 L491.2 291.0 L494.0 284.5 L502.4 286.2 L509.3 286.2 L513.5 288.2 L519.1 291.5 L523.3 299.4 L530.0 300.5 L536.7 298.6 L540.9 293.8 L545.1 284.5 L550.6 285.3 L561.8 286.5 L568.8 289.3 L574.3 297.4 L579.9 303.1 L584.1 297.2 L588.3 296.0 L592.4 282.8 L600.8 284.8 L609.2 288.2 L616.1 292.9 L620.3 293.2 L625.9 301.4 L630.1 302.2 L634.2 297.4 L637.0 299.4 L642.6 293.2 L648.2 284.2 L655.1 285.6 L664.9 287.6 L676.0 292.7 L678.8 301.9 L687.2 299.4 L694.1 294.9 L701.1 283.9 L706.7 285.6 L717.8 287.0 L722.0 292.7 L754.0 292.7 L756.8 292.9 L759.6 300.5 L761.9 303.9 L768.0 300.0 L772.2 294.9 L776.3 282.5 L783.3 283.7 L798.6 285.9 L807.0 300.5 L812.6 298.8 L818.1 294.3 L826.5 288.7 L833.5 287.9 L840.4 289.3 L853.0 293.2 L857.1 300.0 L861.3 302.2 L871.1 299.7 L878.0 289.0 L883.6 284.2 L890.6 285.6 L897.5 285.1 L908.7 299.1 L918.4 297.4 L924.0 293.8 L928.2 285.6 L935.2 285.9 L937.9 292.7 L960.0 292.7 L979.3 292.7 L982.0 301.1 L984.8 302.2 L991.8 300.0 L996.0 298.3 L1000.2 289.3 L1004.3 284.2 L1011.3 284.5 L1018.3 285.1 L1023.8 286.2 L1030.8 291.5 L1034.1 298.6 L1039.2 296.0 L1041.9 292.7 L1054.5 292.7 L1055.9 287.9 L1060.1 289.0 L1069.8 290.4 L1078.2 293.8 L1086.5 300.0 L1094.9 295.7 L1101.9 290.1 L1111.6 289.3 L1121.4 290.4 L1131.1 292.7 L1133.9 298.8 L1139.5 295.5 L1147.8 293.2 L1154.8 289.3 L1167.3 289.6 L1175.7 291.5 L1179.9 299.1 L1188.2 295.5 L1193.8 291.5 L1200.8 290.4 L1206.3 286.7 L1211.9 288.7 L1216.1 293.8 L1220.3 292.7 L1264.9 292.7 L1270.4 293.5 L1274.6 300.5 L1280.2 299.4 L1285.7 296.0 L1291.3 286.7 L1298.3 285.9 L1312.2 286.2 L1320.6 290.4 L1326.1 300.0 L1334.5 299.4 L1338.7 294.9 L1342.9 286.5 L1348.4 282.8 L1356.8 285.1 L1367.9 285.3 L1374.9 290.4 L1380.5 301.1 L1383.3 303.3 L1388.8 300.0 L1391.1 298.9 L1396.7 291.0 L1402.3 283.1 L1407.9 282.3 L1421.8 283.7 L1428.8 287.0 L1433.0 292.7 L1437.1 297.2 L1441.3 303.4 L1445.5 302.2 L1452.5 297.2 L1458.0 284.8 L1463.6 283.1 L1476.2 284.2 L1483.1 292.9 L1516.6 292.9 L1530.5 292.4 L1547.2 293.2 L1552.8 283.1 L1558.4 283.1 L1572.3 285.4 L1579.3 292.7 L1586.3 293.2 L1590.5 303.4 L1597.4 301.7 L1603.0 297.2 L1607.2 289.3 L1611.4 282.0 L1616.9 281.1 L1625.3 283.1 L1636.4 287.6 L1640.6 293.2 L1644.8 303.4 L1653.2 306.7 L1658.7 305.6 L1664.3 297.7 L1669.9 279.4 L1678.3 280.9 L1686.6 283.7 L1695.0 292.7 L1700.6 298.3 L1708.9 308.7 L1717.3 298.3 L1722.9 287.0 L1728.4 278.6 L1734.0 279.7 L1742.4 283.1 L1747.9 293.2 L1750.7 292.7 L1836.6 292.7" fill="none" stroke="#4d4d4d" stroke-width="1.3" stroke-linejoin="round"/>
<circle cx="100.2" cy="292.7" r="10.4" fill="#d6d6d6"/>
<path d="M98.7 288.7v8M101.7 288.7v8" stroke="#eee" stroke-width="0.9"/>
<circle cx="1837.2" cy="292.3" r="10.4" fill="#d6d6d6"/>
<path d="M1835.7 288.3v8M1838.7 288.3v8" stroke="#eee" stroke-width="0.9"/>
<rect x="32.6" y="324" width="8" height="228" fill="#dcdcdc"/>
<circle cx="36.6" cy="324.4" r="10.5" fill="#d6d6d6"/>
<path d="M32.6 322.79999999999995h8M32.6 326.0h8" stroke="#eee" stroke-width="0.9"/>
<circle cx="36.6" cy="552.4" r="10.5" fill="#d6d6d6"/>
<path d="M32.6 550.8h8M32.6 554.0h8" stroke="#eee" stroke-width="0.9"/>
<rect x="102.2" y="324.4" width="21.6" height="228.0" fill="#c3e6cc"/>
<rect x="153" y="324.4" width="24.8" height="228.0" fill="#c3e6cc"/>
<rect x="205.2" y="324.4" width="21.6" height="228.0" fill="#c3e6cc"/>
<rect x="251.9" y="324.4" width="25.1" height="228.0" fill="#c3e6cc"/>
<rect x="403" y="324.4" width="19.4" height="228.0" fill="#c3e6cc"/>
<rect x="448" y="324.4" width="23.7" height="228.0" fill="#c3e6cc"/>
<rect x="496" y="324.4" width="25.0" height="228.0" fill="#c3e6cc"/>
<rect x="549.3" y="324.4" width="24.5" height="228.0" fill="#c3e6cc"/>
<rect x="595.2" y="324.4" width="28.7" height="228.0" fill="#c3e6cc"/>
<rect x="650.1" y="324.4" width="28.7" height="228.0" fill="#c3e6cc"/>
<rect x="779.1" y="324.4" width="27.9" height="228.0" fill="#c3e6cc"/>
<rect x="832.9" y="324.4" width="22.8" height="228.0" fill="#c3e6cc"/>
<rect x="886.1" y="324.4" width="21.7" height="228.0" fill="#c3e6cc"/>
<rect x="932.4" y="324.4" width="49.1" height="228.0" fill="#c3e6cc"/>
<rect x="1005.2" y="324.4" width="29.8" height="228.0" fill="#c3e6cc"/>
<rect x="1060" y="324.4" width="21.8" height="228.0" fill="#c3e6cc"/>
<rect x="1112.2" y="324.4" width="21.7" height="228.0" fill="#c3e6cc"/>
<rect x="1160.9" y="324.4" width="19.0" height="228.0" fill="#c3e6cc"/>
<rect x="1298.3" y="324.4" width="26.5" height="228.0" fill="#c3e6cc"/>
<rect x="1349.3" y="324.4" width="28.4" height="228.0" fill="#c3e6cc"/>
<rect x="1404.5" y="324.4" width="30.4" height="228.0" fill="#c3e6cc"/>
<rect x="1612.2" y="324.4" width="30.4" height="228.0" fill="#c3e6cc"/>
<rect x="1670.2" y="324.4" width="29.5" height="228.0" fill="#c3e6cc"/>
<line x1="100.2" y1="324.4" x2="1837.0" y2="324.4" stroke="#dadadc" stroke-width="1"/>
<line x1="100.2" y1="357.0" x2="1837.0" y2="357.0" stroke="#dadadc" stroke-width="1"/>
<line x1="100.2" y1="381.4" x2="1837.0" y2="381.4" stroke="#dadadc" stroke-width="1"/>
<line x1="100.2" y1="389.5" x2="1837.0" y2="389.5" stroke="#dadadc" stroke-width="1"/>
<line x1="100.2" y1="422.1" x2="1837.0" y2="422.1" stroke="#dadadc" stroke-width="1"/>
<line x1="100.2" y1="438.4" x2="1837.0" y2="438.4" stroke="#dadadc" stroke-width="1"/>
<line x1="100.2" y1="454.7" x2="1837.0" y2="454.7" stroke="#dadadc" stroke-width="1"/>
<line x1="100.2" y1="487.3" x2="1837.0" y2="487.3" stroke="#dadadc" stroke-width="1"/>
<line x1="100.2" y1="495.4" x2="1837.0" y2="495.4" stroke="#dadadc" stroke-width="1"/>
<line x1="100.2" y1="519.8" x2="1837.0" y2="519.8" stroke="#dadadc" stroke-width="1"/>
<line x1="100.2" y1="552.4" x2="1837.0" y2="552.4" stroke="#dadadc" stroke-width="1"/>
<line x1="234.8" y1="324.4" x2="234.8" y2="552.4" stroke="#dadadc" stroke-width="1"/>
<line x1="369.4" y1="324.4" x2="369.4" y2="552.4" stroke="#dadadc" stroke-width="1"/>
<line x1="504.0" y1="324.4" x2="504.0" y2="552.4" stroke="#dadadc" stroke-width="1"/>
<line x1="638.6" y1="324.4" x2="638.6" y2="552.4" stroke="#dadadc" stroke-width="1"/>
<line x1="773.2" y1="324.4" x2="773.2" y2="552.4" stroke="#dadadc" stroke-width="1"/>
<line x1="907.8" y1="324.4" x2="907.8" y2="552.4" stroke="#dadadc" stroke-width="1"/>
<line x1="1042.4" y1="324.4" x2="1042.4" y2="552.4" stroke="#dadadc" stroke-width="1"/>
<line x1="1177.0" y1="324.4" x2="1177.0" y2="552.4" stroke="#dadadc" stroke-width="1"/>
<line x1="1311.6" y1="324.4" x2="1311.6" y2="552.4" stroke="#dadadc" stroke-width="1"/>
<line x1="1446.2" y1="324.4" x2="1446.2" y2="552.4" stroke="#dadadc" stroke-width="1"/>
<line x1="1580.8" y1="324.4" x2="1580.8" y2="552.4" stroke="#dadadc" stroke-width="1"/>
<line x1="1715.4" y1="324.4" x2="1715.4" y2="552.4" stroke="#dadadc" stroke-width="1"/>
<line x1="100.2" y1="324.4" x2="1837.0" y2="324.4" stroke="#cfcfd2" stroke-width="1"/>
<line x1="100.2" y1="552.4" x2="1837.0" y2="552.4" stroke="#c4c4c8" stroke-width="1.5"/>
<path d="M100.6 550.4 L100.9 550.4 Q101.1 550.4 101.2 550.2 L105.1 433.0 Q105.3 427.0 105.7 421.0 L107.8 384.3 Q108.1 378.3 110.8 372.9 L121.4 351.5 Q121.5 351.2 121.7 351.2 L121.8 351.2 Q122.0 351.2 122.0 351.5 L122.9 520.5 Q122.9 524.5 124.4 528.3 L124.7 529.1 Q126.2 532.9 128.3 536.4 L129.3 538.1 Q131.8 542.4 136.1 544.9 L140.4 547.5 Q142.9 549.0 145.4 547.5 L146.0 547.2 Q148.5 545.7 149.6 543.0 L150.8 540.3 Q152.7 535.8 152.9 531.0 L153.8 511.0 Q154.1 505.0 154.6 499.1 L162.8 398.6 Q163.0 396.4 163.5 394.2 L163.6 393.5 Q164.1 391.5 164.5 389.4 L164.7 388.8 Q165.1 386.9 165.6 385.0 L165.8 384.5 Q166.2 382.7 166.7 380.9 L166.8 380.4 Q167.3 378.8 167.8 377.2 L167.9 376.7 Q168.3 375.2 168.8 373.8 L169.0 373.3 Q169.4 372.0 169.9 370.7 L170.0 370.3 Q170.5 369.1 171.0 368.0 L171.1 367.6 Q171.5 366.5 172.0 365.5 L172.2 365.2 Q172.6 364.3 173.1 363.5 L173.3 363.2 Q173.7 362.4 174.2 361.7 L174.3 361.4 Q174.7 360.8 175.2 360.3 L175.3 360.2 Q175.8 359.6 175.8 360.3 L177.7 515.8 Q177.8 521.8 179.5 527.5 L180.3 530.2 Q181.9 535.8 185.7 540.3 L186.5 541.3 Q190.3 545.7 195.8 547.8 L198.0 548.6 Q202.8 550.4 203.5 545.3 L203.6 544.2 Q204.2 539.1 204.5 534.0 L210.0 433.0 Q210.4 427.0 211.0 421.1 L213.8 392.8 Q214.0 390.8 214.5 388.8 L214.6 388.2 Q215.1 386.4 215.6 384.5 L215.7 384.0 Q216.2 382.3 216.7 380.6 L216.8 380.1 Q217.3 378.5 217.7 376.9 L217.9 376.5 Q218.3 375.0 218.8 373.6 L219.0 373.2 Q219.4 371.9 219.9 370.7 L220.1 370.3 Q220.5 369.1 221.0 368.0 L221.2 367.7 Q221.6 366.7 222.1 365.7 L222.3 365.4 Q222.7 364.6 223.2 363.8 L223.4 363.5 Q223.8 362.8 224.3 362.1 L224.5 361.9 Q224.9 361.3 225.4 360.8 L225.5 360.7 Q226.0 360.2 226.0 360.9 L227.1 541.9 Q227.1 545.7 230.6 547.2 L231.4 547.5 Q234.9 549.0 238.6 549.8 L243.1 550.7 Q248.8 551.8 249.8 546.1 L250.0 544.8 Q251.0 539.1 251.3 533.3 L258.5 384.2 Q258.6 382.4 259.0 380.7 L259.2 380.3 Q259.6 378.7 260.1 377.0 L260.2 376.6 Q260.7 375.1 261.1 373.5 L261.3 373.1 Q261.7 371.7 262.2 370.2 L262.3 369.8 Q262.8 368.5 263.2 367.1 L263.4 366.7 Q263.8 365.4 264.3 364.2 L264.4 363.8 Q264.8 362.6 265.3 361.4 L265.4 361.1 Q265.9 360.0 266.4 358.9 L266.5 358.6 Q266.9 357.5 267.4 356.5 L267.5 356.2 Q268.0 355.3 268.4 354.3 L268.6 354.1 Q269.0 353.2 269.5 352.4 L269.6 352.1 Q270.1 351.3 270.5 350.6 L270.7 350.3 Q271.1 349.6 271.6 349.0 L271.7 348.8 Q272.2 348.2 272.6 347.6 L272.8 347.4 Q273.2 346.9 273.7 346.4 L273.8 346.2 Q274.2 345.7 274.7 345.3 L274.8 345.2 Q275.3 344.8 275.3 345.5 L276.7 535.8 Q276.7 539.1 279.2 541.3 L279.7 541.8 Q282.3 544.1 285.4 545.3 L295.5 549.1 Q299.0 550.4 299.6 546.8 L299.7 546.0 Q300.4 542.4 300.5 538.8 L304.3 441.4 Q304.5 435.4 305.1 429.4 L309.5 382.8 Q310.1 376.9 312.6 371.4 L318.9 357.2 Q321.3 351.8 326.3 348.7 L329.1 346.9 Q332.4 344.8 336.2 344.0 L337.0 343.8 Q340.8 342.9 342.1 346.5 L343.1 349.3 Q344.9 354.6 346.8 359.9 L353.0 377.3 Q353.3 378.3 353.8 377.4 L363.1 359.8 Q365.8 354.6 370.2 350.6 L372.8 348.2 Q375.6 345.7 378.1 348.4 L378.7 349.0 Q381.2 351.8 381.2 355.5 L382.6 548.3 Q382.6 549.0 382.8 549.6 L382.9 549.8 Q383.1 550.4 383.8 550.4 L395.5 550.4 Q400.7 550.4 401.3 545.3 L401.4 544.2 Q402.1 539.1 402.3 534.0 L408.9 373.4 Q409.0 371.3 409.5 369.3 L409.6 368.7 Q410.1 366.8 410.5 364.9 L410.7 364.3 Q411.1 362.6 411.6 360.8 L411.7 360.3 Q412.2 358.7 412.6 357.0 L412.8 356.6 Q413.2 355.1 413.7 353.6 L413.8 353.1 Q414.3 351.8 414.7 350.4 L414.9 350.0 Q415.3 348.8 415.8 347.6 L415.9 347.2 Q416.3 346.1 416.8 345.0 L417.0 344.7 Q417.4 343.7 417.9 342.8 L418.0 342.5 Q418.4 341.7 418.9 340.9 L419.1 340.6 Q419.5 339.9 419.9 339.2 L420.1 339.0 Q420.5 338.5 421.0 337.9 L421.1 337.8 Q421.6 337.3 421.6 338.0 L423.5 537.1 Q423.5 540.8 426.4 543.0 L427.0 543.5 Q429.9 545.7 433.5 546.5 L440.8 548.1 Q445.3 549.0 446.1 544.6 L446.3 543.6 Q447.2 539.1 447.4 534.6 L452.0 405.2 Q452.2 399.2 452.9 393.2 L456.2 361.9 Q456.4 360.2 456.9 358.5 L457.0 358.0 Q457.5 356.4 458.0 354.8 L458.1 354.3 Q458.5 352.8 459.0 351.4 L459.2 350.9 Q459.6 349.5 460.1 348.2 L460.2 347.8 Q460.7 346.5 461.2 345.2 L461.3 344.8 Q461.8 343.6 462.2 342.5 L462.4 342.1 Q462.8 341.1 463.3 340.0 L463.5 339.7 Q463.9 338.7 464.4 337.7 L464.5 337.4 Q465.0 336.6 465.5 335.7 L465.6 335.5 Q466.0 334.7 466.5 333.9 L466.7 333.7 Q467.1 333.0 467.6 332.4 L467.8 332.2 Q468.2 331.6 468.7 331.1 L468.8 330.9 Q469.3 330.4 469.7 330.0 L469.8 329.9 Q470.3 329.5 470.3 330.1 L472.2 541.4 Q472.3 547.4 478.1 548.7 L481.9 549.6 Q485.7 550.4 489.4 549.8 L490.3 549.6 Q494.0 549.0 494.4 545.2 L495.1 538.9 Q495.7 532.9 495.9 526.9 L502.3 381.2 Q502.4 379.7 502.8 378.1 L502.9 377.7 Q503.4 376.3 503.8 374.8 L503.9 374.5 Q504.4 373.1 504.8 371.7 L505.0 371.3 Q505.4 370.0 505.8 368.7 L506.0 368.3 Q506.4 367.1 506.8 365.8 L507.0 365.5 Q507.4 364.3 507.9 363.1 L508.0 362.8 Q508.4 361.7 508.9 360.6 L509.0 360.3 Q509.4 359.2 509.9 358.2 L510.0 357.9 Q510.4 356.9 510.9 355.9 L511.0 355.7 Q511.4 354.7 511.9 353.8 L512.0 353.6 Q512.4 352.7 512.9 351.9 L513.0 351.6 Q513.4 350.9 513.9 350.1 L514.0 349.9 Q514.4 349.1 514.9 348.4 L515.0 348.2 Q515.5 347.6 515.9 347.0 L516.0 346.8 Q516.5 346.2 516.9 345.6 L517.0 345.4 Q517.5 344.9 517.9 344.4 L518.0 344.3 Q518.5 343.8 518.9 343.4 L519.1 343.2 Q519.5 342.8 519.9 342.5 L520.0 342.4 Q520.5 342.0 520.5 342.6 L521.8 541.8 Q521.9 545.7 525.5 547.2 L526.3 547.5 Q530.0 549.0 533.8 549.6 L535.7 549.9 Q539.5 550.4 543.3 549.8 L544.1 549.6 Q547.9 549.0 548.4 545.2 L548.6 543.6 Q549.3 539.1 549.4 534.6 L554.6 394.0 Q554.8 388.0 556.7 382.3 L558.5 377.0 Q560.4 371.3 563.1 365.9 L571.3 349.6 Q571.5 349.0 572.2 349.0 L572.3 349.0 Q572.9 349.0 572.9 349.6 L574.3 534.3 Q574.3 539.1 577.5 542.8 L578.2 543.6 Q581.3 547.4 586.1 548.0 L589.4 548.4 Q593.8 549.0 594.5 544.6 L594.6 543.6 Q595.2 539.1 595.4 534.6 L599.2 396.8 Q599.4 390.8 601.2 385.1 L606.1 369.5 Q606.4 368.5 606.8 367.6 L607.0 367.4 Q607.4 366.6 607.9 365.7 L608.0 365.5 Q608.4 364.7 608.9 364.0 L609.0 363.8 Q609.4 363.0 609.9 362.3 L610.0 362.1 Q610.5 361.4 610.9 360.7 L611.0 360.5 Q611.5 359.9 611.9 359.2 L612.1 359.0 Q612.5 358.4 613.0 357.9 L613.1 357.7 Q613.5 357.1 614.0 356.6 L614.1 356.4 Q614.5 355.9 615.0 355.4 L615.1 355.3 Q615.6 354.8 616.0 354.4 L616.2 354.2 Q616.6 353.8 617.1 353.4 L617.2 353.3 Q617.6 352.9 618.1 352.6 L618.2 352.5 Q618.6 352.1 619.1 351.8 L619.2 351.7 Q619.7 351.5 620.1 351.2 L620.2 351.1 Q620.7 350.9 621.1 350.7 L621.2 350.6 Q621.7 350.4 621.7 350.9 L623.6 543.8 Q623.7 547.4 627.2 548.1 L627.9 548.3 Q631.5 549.0 635.0 549.0 L643.7 549.0 Q648.2 549.0 648.8 544.6 L648.9 543.6 Q649.6 539.1 649.7 534.6 L654.9 399.6 Q655.1 393.6 657.2 387.9 L661.7 375.1 Q662.1 374.1 662.6 373.1 L662.7 372.8 Q663.1 371.8 663.6 370.9 L663.7 370.6 Q664.1 369.7 664.6 368.8 L664.7 368.6 Q665.2 367.7 665.6 366.9 L665.8 366.7 Q666.2 365.9 666.6 365.1 L666.8 364.9 Q667.2 364.1 667.7 363.4 L667.8 363.2 Q668.2 362.5 668.7 361.8 L668.8 361.6 Q669.3 361.0 669.7 360.3 L669.8 360.2 Q670.3 359.6 670.7 359.0 L670.9 358.8 Q671.3 358.3 671.8 357.8 L671.9 357.6 Q672.3 357.1 672.8 356.7 L672.9 356.5 Q673.3 356.1 673.8 355.7 L673.9 355.6 Q674.4 355.2 674.8 354.8 L674.9 354.7 Q675.4 354.4 675.8 354.1 L676.0 354.0 Q676.4 353.7 676.9 353.5 L677.0 353.4 Q677.4 353.2 677.4 353.7 L678.8 534.6 Q678.8 539.1 681.3 542.8 L681.9 543.6 Q684.4 547.4 688.8 548.2 L697.5 549.8 Q701.1 550.4 701.7 546.8 L701.9 546.0 Q702.5 542.4 702.7 538.8 L709.2 391.2 Q709.5 385.2 712.2 379.9 L717.9 368.3 Q720.6 362.9 724.9 358.7 L727.5 356.0 Q731.8 351.8 737.7 351.1 L750.9 349.7 Q756.8 349.0 756.9 355.0 L758.2 544.4 Q758.2 550.4 764.2 550.4 L771.2 550.4 Q776.3 550.4 777.0 545.3 L777.1 544.2 Q777.7 539.1 778.0 534.0 L783.0 419.1 Q783.3 413.1 784.5 407.2 L790.0 380.9 Q790.3 379.7 790.7 378.5 L790.9 378.2 Q791.3 377.0 791.8 375.9 L791.9 375.6 Q792.3 374.5 792.8 373.5 L792.9 373.2 Q793.3 372.2 793.8 371.2 L793.9 370.9 Q794.4 370.0 794.8 369.1 L794.9 368.8 Q795.4 367.9 795.8 367.1 L796.0 366.8 Q796.4 366.0 796.9 365.2 L797.0 365.0 Q797.4 364.2 797.9 363.5 L798.0 363.3 Q798.4 362.6 798.9 361.9 L799.0 361.7 Q799.5 361.1 799.9 360.5 L800.1 360.3 Q800.5 359.8 800.9 359.2 L801.1 359.1 Q801.5 358.6 802.0 358.1 L802.1 357.9 Q802.5 357.5 803.0 357.1 L803.1 357.0 Q803.6 356.6 804.0 356.2 L804.1 356.1 Q804.6 355.8 805.0 355.5 L805.1 355.4 Q805.6 355.1 805.6 355.7 L807.0 534.3 Q807.0 539.1 810.7 542.1 L811.6 542.7 Q815.3 545.7 820.1 546.3 L825.4 546.9 Q829.3 547.4 830.5 543.6 L830.8 542.8 Q832.1 539.1 832.3 535.2 L840.1 405.2 Q840.4 399.2 843.1 393.8 L845.2 389.7 Q847.4 385.2 850.1 381.1 L853.0 376.9 Q853.5 376.0 853.5 377.0 L855.7 536.4 Q855.7 540.8 858.9 543.7 L859.6 544.4 Q862.7 547.4 867.0 547.7 L879.1 548.7 Q883.6 549.0 884.2 544.6 L884.4 543.6 Q885.0 539.1 885.2 534.6 L889.0 423.3 Q889.2 417.3 891.7 411.8 L895.6 403.1 Q896.1 401.9 896.6 400.7 L896.7 400.4 Q897.2 399.2 897.6 398.1 L897.8 397.7 Q898.2 396.7 898.7 395.7 L898.8 395.4 Q899.2 394.4 899.7 393.5 L899.8 393.2 Q900.3 392.3 900.7 391.5 L900.9 391.3 Q901.3 390.5 901.8 389.8 L901.9 389.5 Q902.3 388.9 902.8 388.3 L902.9 388.1 Q903.4 387.5 903.8 387.0 L904.0 386.8 Q904.4 386.3 904.9 385.9 L905.0 385.8 Q905.4 385.4 905.9 385.1 L906.0 385.0 Q906.5 384.7 906.5 385.2 L908.6 539.4 Q908.7 544.1 913.1 545.5 L914.1 545.9 Q918.4 547.4 922.9 548.6 L924.6 549.1 Q929.6 550.4 930.2 545.3 L930.4 544.2 Q931.0 539.1 931.3 534.0 L937.7 431.0 Q937.9 427.0 940.5 423.9 L941.0 423.2 Q943.5 420.1 947.3 418.8 L959.4 414.7 Q960.0 414.5 960.5 414.5 L960.6 414.5 Q961.1 414.5 961.7 414.5 L976.3 413.7 Q977.9 413.7 979.1 414.7 L979.4 414.9 Q980.6 415.9 980.7 417.5 L981.5 545.6 Q981.5 549.0 984.9 549.6 L985.6 549.8 Q989.0 550.4 992.4 550.1 L999.9 549.4 Q1004.3 549.0 1005.0 544.6 L1005.1 543.6 Q1005.7 539.1 1005.8 534.6 L1008.4 441.4 Q1008.5 435.4 1010.0 429.6 L1016.6 403.2 Q1016.9 401.9 1017.3 400.8 L1017.4 400.5 Q1017.9 399.4 1018.3 398.3 L1018.5 398.0 Q1018.9 396.9 1019.3 395.9 L1019.5 395.6 Q1019.9 394.6 1020.4 393.6 L1020.5 393.4 Q1020.9 392.4 1021.4 391.5 L1021.5 391.2 Q1021.9 390.4 1022.4 389.5 L1022.5 389.3 Q1022.9 388.4 1023.4 387.6 L1023.5 387.4 Q1023.9 386.6 1024.4 385.9 L1024.5 385.7 Q1025.0 385.0 1025.4 384.3 L1025.5 384.1 Q1026.0 383.4 1026.4 382.8 L1026.5 382.6 Q1027.0 382.0 1027.4 381.4 L1027.6 381.3 Q1028.0 380.7 1028.4 380.2 L1028.6 380.1 Q1029.0 379.6 1029.4 379.1 L1029.6 379.0 Q1030.0 378.6 1030.5 378.2 L1030.6 378.1 Q1031.0 377.7 1031.5 377.4 L1031.6 377.3 Q1032.0 376.9 1032.5 376.7 L1032.6 376.6 Q1033.0 376.3 1033.0 376.8 L1034.9 542.2 Q1035.0 545.7 1038.1 547.2 L1038.8 547.5 Q1041.9 549.0 1045.4 549.0 L1052.8 549.0 Q1057.3 549.0 1057.9 544.6 L1058.0 543.6 Q1058.7 539.1 1058.9 534.6 L1062.6 452.5 Q1062.8 446.5 1063.8 440.6 L1069.6 406.2 Q1069.8 404.7 1070.3 403.3 L1070.4 402.9 Q1070.9 401.6 1071.3 400.2 L1071.5 399.8 Q1071.9 398.6 1072.4 397.4 L1072.6 397.1 Q1073.0 396.0 1073.5 394.9 L1073.6 394.6 Q1074.0 393.6 1074.5 392.6 L1074.7 392.3 Q1075.1 391.4 1075.6 390.6 L1075.7 390.3 Q1076.2 389.6 1076.6 388.8 L1076.8 388.6 Q1077.2 388.0 1077.7 387.3 L1077.9 387.1 Q1078.3 386.6 1078.8 386.1 L1078.9 385.9 Q1079.3 385.5 1079.8 385.1 L1079.9 385.0 Q1080.4 384.7 1080.4 385.3 L1082.3 532.6 Q1082.3 537.5 1085.5 541.2 L1086.2 542.0 Q1089.3 545.7 1094.1 546.8 L1105.2 549.3 Q1110.2 550.4 1110.8 545.3 L1111.0 544.2 Q1111.6 539.1 1111.9 534.0 L1116.8 455.3 Q1117.2 449.3 1118.5 443.5 L1123.8 420.2 Q1124.1 418.7 1124.6 417.1 L1124.7 416.7 Q1125.2 415.2 1125.6 413.8 L1125.8 413.4 Q1126.2 412.1 1126.6 410.9 L1126.8 410.5 Q1127.2 409.3 1127.7 408.2 L1127.8 407.9 Q1128.2 406.9 1128.7 405.9 L1128.8 405.6 Q1129.3 404.7 1129.7 403.9 L1129.9 403.6 Q1130.3 402.8 1130.7 402.2 L1130.9 401.9 Q1131.3 401.3 1131.8 400.8 L1131.9 400.6 Q1132.3 400.1 1132.8 399.7 L1132.9 399.6 Q1133.3 399.2 1133.3 399.8 L1134.7 540.8 Q1134.7 545.7 1139.4 547.2 L1140.4 547.5 Q1145.0 549.0 1149.9 549.6 L1153.9 550.0 Q1157.6 550.4 1158.2 546.8 L1158.3 546.0 Q1159.0 542.4 1159.2 538.8 L1164.2 460.9 Q1164.5 454.9 1165.8 449.0 L1171.1 423.4 Q1171.5 421.5 1172.0 419.5 L1172.2 418.8 Q1172.6 417.1 1173.1 415.4 L1173.2 414.8 Q1173.7 413.3 1174.1 411.8 L1174.3 411.3 Q1174.7 410.0 1175.2 408.7 L1175.4 408.3 Q1175.8 407.2 1176.3 406.2 L1176.5 405.8 Q1176.9 404.9 1177.4 404.1 L1177.6 403.8 Q1178.0 403.2 1178.4 402.6 L1178.5 402.5 Q1179.0 401.9 1179.0 402.7 L1180.4 535.2 Q1180.4 540.8 1184.6 544.5 L1185.5 545.3 Q1189.6 549.0 1195.2 549.5 L1199.8 550.0 Q1204.9 550.4 1205.6 545.3 L1205.7 544.2 Q1206.3 539.1 1206.6 534.0 L1211.6 449.7 Q1211.9 443.7 1213.4 437.9 L1214.9 431.9 Q1216.1 427.0 1220.5 424.5 L1221.5 424.0 Q1225.8 421.5 1230.9 420.8 L1245.4 419.0 Q1248.1 418.7 1250.6 417.4 L1251.2 417.1 Q1253.7 415.9 1256.5 415.4 L1269.0 413.3 Q1270.4 413.1 1271.4 412.1 L1271.9 411.6 Q1272.7 410.9 1272.7 411.9 L1273.7 544.4 Q1273.8 550.4 1279.8 550.4 L1290.3 550.4 Q1295.5 550.4 1296.5 545.3 L1296.7 544.2 Q1297.7 539.1 1298.0 533.9 L1302.2 449.7 Q1302.5 443.7 1303.9 437.9 L1309.1 417.4 Q1309.4 415.9 1309.9 414.4 L1310.0 414.0 Q1310.5 412.6 1311.0 411.2 L1311.1 410.9 Q1311.6 409.6 1312.1 408.3 L1312.2 407.9 Q1312.6 406.7 1313.1 405.5 L1313.3 405.2 Q1313.7 404.1 1314.2 403.0 L1314.3 402.6 Q1314.8 401.6 1315.3 400.6 L1315.4 400.3 Q1315.9 399.4 1316.3 398.5 L1316.5 398.2 Q1316.9 397.4 1317.4 396.5 L1317.6 396.3 Q1318.0 395.5 1318.5 394.8 L1318.6 394.6 Q1319.1 393.9 1319.6 393.2 L1319.7 393.0 Q1320.1 392.5 1320.6 391.9 L1320.8 391.7 Q1321.2 391.2 1321.7 390.8 L1321.9 390.6 Q1322.3 390.2 1322.8 389.9 L1322.9 389.8 Q1323.4 389.4 1323.4 390.0 L1325.0 540.9 Q1325.0 545.7 1329.3 547.8 L1330.2 548.3 Q1334.5 550.4 1339.3 550.4 L1341.8 550.4 Q1347.0 550.4 1348.3 545.3 L1348.6 544.2 Q1349.8 539.1 1350.1 533.9 L1353.8 447.0 Q1354.0 441.0 1355.5 435.1 L1362.0 408.8 Q1362.4 407.5 1362.9 406.3 L1363.0 405.9 Q1363.4 404.7 1363.9 403.5 L1364.1 403.2 Q1364.5 402.1 1365.0 401.0 L1365.1 400.7 Q1365.6 399.6 1366.1 398.6 L1366.2 398.3 Q1366.7 397.3 1367.1 396.4 L1367.3 396.1 Q1367.7 395.2 1368.2 394.3 L1368.4 394.1 Q1368.8 393.3 1369.3 392.5 L1369.4 392.3 Q1369.9 391.5 1370.4 390.8 L1370.5 390.6 Q1370.9 389.9 1371.4 389.3 L1371.6 389.1 Q1372.0 388.5 1372.5 388.0 L1372.6 387.8 Q1373.1 387.3 1373.6 386.8 L1373.7 386.7 Q1374.2 386.3 1374.6 385.9 L1374.8 385.7 Q1375.2 385.4 1375.7 385.1 L1375.8 385.0 Q1376.3 384.7 1376.3 385.2 L1378.2 545.1 Q1378.3 550.4 1383.5 551.1 L1384.7 551.2 Q1390.0 551.8 1395.2 551.3 L1397.1 551.1 Q1402.3 550.5 1403.3 545.4 L1403.5 544.3 Q1404.5 539.2 1404.7 534.0 L1407.7 438.6 Q1407.9 432.6 1409.8 427.0 L1413.0 417.3 Q1413.4 415.9 1413.9 414.6 L1414.0 414.2 Q1414.5 413.0 1414.9 411.7 L1415.1 411.3 Q1415.5 410.1 1416.0 408.9 L1416.1 408.6 Q1416.5 407.4 1417.0 406.2 L1417.1 405.9 Q1417.6 404.8 1418.0 403.7 L1418.1 403.4 Q1418.6 402.4 1419.0 401.3 L1419.2 401.0 Q1419.6 400.0 1420.1 399.0 L1420.2 398.8 Q1420.6 397.8 1421.1 396.9 L1421.2 396.6 Q1421.7 395.7 1422.1 394.8 L1422.3 394.6 Q1422.7 393.8 1423.2 392.9 L1423.3 392.7 Q1423.7 391.9 1424.2 391.2 L1424.3 391.0 Q1424.7 390.2 1425.2 389.5 L1425.3 389.3 Q1425.8 388.6 1426.2 388.0 L1426.4 387.8 Q1426.8 387.2 1427.3 386.6 L1427.4 386.4 Q1427.8 385.9 1428.3 385.3 L1428.4 385.2 Q1428.9 384.7 1429.3 384.2 L1429.4 384.0 Q1429.9 383.6 1430.3 383.1 L1430.5 383.0 Q1430.9 382.6 1431.4 382.2 L1431.5 382.1 Q1431.9 381.8 1432.4 381.5 L1432.5 381.4 Q1433.0 381.1 1433.0 381.6 L1434.9 534.1 Q1434.9 539.2 1439.1 542.2 L1440.0 542.9 Q1444.1 545.8 1449.1 546.8 L1454.9 548.0 Q1460.8 549.1 1461.0 543.1 L1463.5 441.4 Q1463.6 435.4 1465.7 429.8 L1472.7 410.4 Q1474.8 404.8 1479.0 400.5 L1487.3 392.3 Q1491.5 388.0 1497.4 387.1 L1502.3 386.2 Q1508.2 385.3 1514.2 384.5 L1530.1 382.6 Q1536.1 381.9 1542.0 382.7 L1545.5 383.1 Q1551.4 383.9 1551.8 389.9 L1552.5 401.6 Q1552.8 407.6 1553.0 413.6 L1555.0 501.3 Q1555.1 502.3 1555.1 501.3 L1557.1 441.4 Q1557.3 435.4 1558.7 429.6 L1562.6 413.4 Q1564.0 407.6 1567.7 402.9 L1574.5 394.4 Q1575.1 393.6 1575.6 392.7 L1575.7 392.5 Q1576.1 391.6 1576.6 390.8 L1576.7 390.5 Q1577.1 389.7 1577.6 389.0 L1577.7 388.7 Q1578.2 388.0 1578.6 387.3 L1578.8 387.1 Q1579.2 386.5 1579.6 385.8 L1579.8 385.6 Q1580.2 385.0 1580.6 384.5 L1580.8 384.3 Q1581.2 383.8 1581.7 383.3 L1581.8 383.1 Q1582.2 382.7 1582.7 382.2 L1582.8 382.1 Q1583.2 381.7 1583.7 381.3 L1583.8 381.2 Q1584.2 380.9 1584.7 380.6 L1584.8 380.5 Q1585.3 380.2 1585.7 380.0 L1585.8 379.9 Q1586.3 379.7 1586.3 380.2 L1587.6 543.4 Q1587.7 549.1 1593.3 550.1 L1595.2 550.5 Q1600.2 551.4 1605.2 550.4 L1606.3 550.1 Q1611.4 549.1 1611.5 544.0 L1612.6 483.2 Q1612.8 477.2 1613.4 471.3 L1619.6 417.2 Q1619.7 415.9 1620.2 414.7 L1620.3 414.4 Q1620.7 413.3 1621.2 412.1 L1621.3 411.8 Q1621.7 410.7 1622.2 409.6 L1622.3 409.3 Q1622.8 408.2 1623.2 407.1 L1623.3 406.9 Q1623.8 405.8 1624.2 404.8 L1624.3 404.5 Q1624.8 403.6 1625.2 402.6 L1625.4 402.3 Q1625.8 401.4 1626.3 400.4 L1626.4 400.2 Q1626.8 399.3 1627.3 398.4 L1627.4 398.2 Q1627.8 397.3 1628.3 396.4 L1628.4 396.2 Q1628.8 395.4 1629.3 394.6 L1629.4 394.4 Q1629.9 393.6 1630.3 392.8 L1630.4 392.6 Q1630.9 391.9 1631.3 391.2 L1631.4 391.0 Q1631.9 390.3 1632.3 389.6 L1632.5 389.5 Q1632.9 388.8 1633.4 388.2 L1633.5 388.0 Q1633.9 387.4 1634.4 386.8 L1634.5 386.7 Q1634.9 386.1 1635.4 385.6 L1635.5 385.4 Q1635.9 384.9 1636.4 384.4 L1636.5 384.3 Q1637.0 383.8 1637.4 383.3 L1637.5 383.2 Q1638.0 382.8 1638.4 382.4 L1638.5 382.2 Q1639.0 381.9 1639.4 381.5 L1639.6 381.4 Q1640.0 381.0 1640.4 380.7 L1640.6 380.6 Q1641.0 380.3 1641.5 380.0 L1641.6 380.0 Q1642.0 379.7 1642.0 380.2 L1643.4 541.5 Q1643.4 547.5 1649.3 548.6 L1653.8 549.5 Q1658.7 550.5 1663.8 550.5 L1664.9 550.5 Q1669.9 550.5 1670.0 545.5 L1672.5 441.4 Q1672.7 435.4 1675.0 429.9 L1680.6 417.0 Q1681.0 415.9 1681.5 414.8 L1681.6 414.5 Q1682.1 413.4 1682.6 412.3 L1682.7 412.1 Q1683.2 411.0 1683.6 410.0 L1683.7 409.7 Q1684.2 408.8 1684.7 407.8 L1684.8 407.5 Q1685.3 406.6 1685.7 405.7 L1685.9 405.4 Q1686.3 404.5 1686.8 403.7 L1686.9 403.4 Q1687.4 402.6 1687.8 401.8 L1688.0 401.6 Q1688.4 400.8 1688.9 400.0 L1689.0 399.8 Q1689.5 399.1 1689.9 398.3 L1690.1 398.1 Q1690.5 397.5 1691.0 396.8 L1691.1 396.6 Q1691.6 396.0 1692.0 395.3 L1692.2 395.2 Q1692.6 394.6 1693.1 394.0 L1693.2 393.9 Q1693.7 393.3 1694.2 392.8 L1694.3 392.7 Q1694.7 392.2 1695.2 391.7 L1695.3 391.6 Q1695.8 391.1 1696.3 390.7 L1696.4 390.6 Q1696.8 390.2 1697.3 389.8 L1697.4 389.7 Q1697.9 389.4 1698.4 389.0 L1698.5 389.0 Q1698.9 388.6 1699.4 388.4 L1699.5 388.3 Q1700.0 388.0 1700.0 388.6 L1701.1 543.1 Q1701.1 549.1 1707.1 549.5 L1719.7 550.2 Q1725.6 550.5 1725.8 544.5 L1728.3 438.3 Q1728.4 432.6 1730.9 427.6 L1731.5 426.5 Q1734.0 421.5 1737.0 416.7 L1744.8 404.3 Q1747.9 399.2 1753.5 397.0 L1757.2 395.5 Q1761.9 393.6 1766.9 393.4 L1768.0 393.3 Q1773.0 393.1 1778.0 393.5 L1792.1 394.6 Q1798.1 395.0 1804.1 395.2 L1836.6 396.4" fill="none" stroke="#992a51" stroke-width="1.7" stroke-linejoin="round"/>
<path d="M100.6 407.5 L101.6 405.0 L102.5 403.3 L103.9 403.8 L105.3 406.5 L106.7 407.5 L108.5 407.5 L110.2 409.7 L111.9 410.3 L113.7 411.7 L114.4 412.3 L115.1 415.2 L115.8 415.7 L116.5 418.7 L116.8 420.4 L117.1 421.3 L117.4 423.2 L117.7 425.9 L118.0 428.8 L118.3 428.8 L118.6 430.9 L118.9 433.9 L119.3 435.4 L119.5 438.4 L119.7 439.3 L120.0 440.7 L120.2 444.1 L120.4 443.5 L120.6 446.5 L122.0 448.9 L123.4 448.8 L124.8 450.7 L125.5 451.5 L126.2 453.2 L126.9 455.4 L127.6 457.7 L128.1 456.8 L128.7 453.4 L129.2 452.7 L129.7 451.1 L130.2 448.6 L130.7 447.3 L131.3 444.3 L131.8 443.7 L133.5 441.5 L135.1 440.7 L136.8 440.9 L138.5 439.1 L140.2 438.2 L142.0 438.2 L143.9 439.3 L145.7 439.6 L146.0 437.6 L146.3 435.3 L146.7 434.8 L147.0 432.6 L147.3 429.6 L147.6 428.6 L147.9 426.6 L148.2 425.7 L148.5 422.8 L150.6 423.4 L152.7 422.3 L154.8 424.1 L156.9 422.8 L158.7 421.4 L160.6 421.7 L162.4 421.5 L163.8 423.5 L165.2 423.3 L166.6 425.6 L168.0 425.8 L169.4 428.4 L170.2 430.8 L171.1 433.0 L171.9 434.5 L172.8 437.2 L173.6 438.2 L174.0 439.5 L174.4 442.3 L174.8 443.8 L175.2 445.5 L175.6 447.0 L176.0 449.8 L176.4 450.7 L178.7 452.3 L181.0 451.6 L183.3 452.1 L184.7 453.9 L186.1 453.7 L187.5 456.3 L188.4 454.9 L189.2 452.8 L190.0 451.7 L190.9 449.3 L191.7 446.5 L192.2 444.2 L192.7 442.7 L193.3 441.7 L193.8 438.3 L194.3 437.7 L194.8 435.2 L195.4 433.3 L195.9 432.6 L196.6 429.8 L197.3 430.0 L198.0 426.6 L198.7 425.3 L199.4 424.0 L200.1 423.5 L200.8 419.8 L201.5 419.1 L202.1 417.7 L202.8 415.9 L204.6 417.9 L206.3 418.8 L208.1 420.0 L209.8 420.1 L211.9 419.5 L214.0 419.8 L216.1 419.7 L218.2 420.1 L219.1 422.7 L220.0 424.5 L221.0 424.0 L221.9 425.7 L222.8 427.5 L223.7 429.8 L223.9 430.9 L224.1 433.4 L224.3 435.4 L224.5 436.4 L224.7 437.5 L224.9 440.3 L225.1 442.0 L225.3 444.3 L225.5 447.1 L225.7 448.2 L225.9 449.6 L226.1 451.6 L226.3 453.6 L226.5 454.9 L226.7 455.7 L226.9 459.9 L227.1 461.6 L227.3 463.8 L227.5 465.6 L227.7 466.5 L227.9 468.8 L229.3 467.2 L230.7 465.0 L232.1 465.0 L233.5 462.1 L234.9 461.9 L236.0 459.1 L237.2 457.8 L238.4 456.1 L239.5 454.9 L240.7 452.6 L241.9 452.1 L242.2 449.0 L242.4 447.6 L242.7 445.7 L243.0 444.6 L243.3 441.9 L243.6 442.3 L243.9 439.9 L244.2 436.9 L244.5 435.3 L244.8 433.8 L245.1 432.0 L245.4 429.6 L245.7 429.7 L246.0 427.0 L246.3 426.5 L246.6 423.3 L246.9 421.5 L247.1 418.7 L247.4 416.9 L247.7 415.7 L248.0 413.7 L248.3 413.4 L248.5 409.8 L248.8 408.9 L250.9 407.7 L253.0 410.1 L255.1 409.0 L257.2 408.9 L259.3 408.7 L261.4 410.4 L263.4 409.8 L265.5 411.7 L266.5 413.6 L267.5 416.5 L268.5 418.0 L269.5 419.4 L270.5 420.0 L271.5 422.1 L272.5 424.2 L272.7 425.2 L272.8 428.6 L273.0 429.7 L273.2 432.2 L273.3 432.8 L273.5 434.3 L273.6 437.7 L273.8 439.9 L274.0 441.4 L274.1 443.1 L274.3 444.9 L274.5 446.5 L274.6 447.0 L274.8 449.5 L275.0 450.9 L275.1 451.9 L275.3 454.9 L276.0 455.4 L276.7 457.8 L277.4 459.5 L278.1 461.9 L279.8 463.1 L281.6 464.4 L283.3 463.8 L285.0 464.6 L285.9 463.8 L286.7 462.0 L287.5 460.0 L288.4 456.5 L289.2 454.9 L289.5 452.3 L289.8 450.5 L290.1 448.5 L290.5 446.7 L290.8 445.9 L291.1 444.8 L291.4 442.8 L291.7 440.0 L292.0 438.2 L292.3 436.8 L292.7 435.3 L293.0 431.7 L293.3 431.4 L293.6 430.2 L294.0 428.1 L294.3 426.2 L294.6 423.7 L295.0 421.1 L295.3 420.9 L295.6 417.9 L295.9 417.3 L296.3 416.0 L296.6 412.7 L296.9 410.9 L297.3 410.5 L297.6 407.5 L299.3 408.8 L301.1 408.1 L302.8 408.6 L304.5 410.3 L305.9 411.1 L307.3 414.8 L308.7 416.3 L310.1 417.3 L311.5 417.7 L312.9 420.9 L314.3 422.7 L315.7 422.8 L316.3 425.0 L316.9 425.9 L317.5 428.1 L318.2 428.7 L318.8 430.1 L319.4 434.3 L320.0 435.2 L320.6 436.5 L321.3 438.2 L323.3 439.3 L325.2 438.0 L327.2 439.1 L329.2 439.0 L331.2 437.4 L333.2 437.5 L335.2 438.2 L337.1 438.1 L338.9 438.4 L340.8 439.6 L342.6 439.7 L344.5 438.8 L346.3 439.1 L348.2 438.2 L350.1 440.2 L351.9 438.6 L353.8 438.8 L355.6 439.0 L357.5 439.8 L359.3 438.4 L361.2 439.6 L363.1 438.5 L364.9 438.4 L366.8 438.3 L368.6 438.2 L370.5 437.2 L372.3 438.5 L374.2 438.0 L376.1 437.8 L377.9 440.1 L379.8 439.6 L379.9 440.6 L380.0 443.3 L380.1 445.8 L380.2 447.3 L380.3 448.6 L380.4 451.0 L380.5 452.9 L380.6 455.4 L380.7 455.6 L380.8 458.6 L380.9 459.7 L381.0 461.7 L381.1 464.8 L381.2 466.0 L382.3 467.7 L383.4 469.5 L384.5 471.7 L385.6 473.8 L386.7 474.4 L388.1 472.9 L389.5 471.9 L390.9 470.2 L391.2 468.3 L391.4 466.4 L391.7 465.0 L391.9 462.5 L392.2 460.8 L392.4 458.8 L392.7 458.1 L392.9 455.5 L393.2 454.1 L393.5 452.4 L393.7 449.3 L393.9 446.8 L394.0 445.8 L394.2 444.9 L394.3 442.8 L394.5 439.1 L394.6 437.2 L394.8 436.2 L394.9 433.3 L395.1 431.9 L395.3 429.6 L395.4 429.3 L395.6 427.8 L395.7 426.2 L395.9 422.4 L396.0 422.0 L396.2 420.0 L396.3 416.8 L396.5 415.9 L397.3 414.9 L398.2 413.2 L399.0 409.3 L399.8 409.3 L400.7 406.1 L402.6 406.1 L404.6 406.7 L406.5 408.2 L408.5 408.1 L410.4 407.5 L412.1 407.8 L413.8 409.6 L415.4 410.9 L417.1 411.6 L418.8 413.1 L419.1 414.3 L419.3 416.5 L419.6 419.5 L419.9 419.6 L420.2 423.0 L420.5 424.6 L420.7 425.5 L421.0 428.3 L421.3 431.0 L421.6 432.6 L421.7 434.5 L421.8 435.1 L421.9 439.3 L422.0 440.6 L422.0 443.0 L422.1 442.5 L422.2 444.8 L422.3 446.0 L422.4 449.8 L422.5 450.3 L422.6 451.7 L422.7 454.3 L422.8 457.4 L422.9 459.0 L423.0 459.4 L423.1 460.9 L423.2 464.7 L423.3 465.6 L423.4 467.8 L423.5 468.0 L423.6 469.8 L423.7 473.2 L423.8 474.4 L423.9 475.3 L424.0 479.4 L424.1 480.4 L424.2 482.7 L424.3 482.6 L424.4 485.5 L425.0 484.6 L425.6 480.7 L426.2 480.9 L426.8 478.0 L427.5 475.8 L428.1 474.5 L428.7 473.6 L429.3 470.1 L429.9 468.8 L431.8 466.9 L433.6 467.0 L435.5 466.0 L435.8 463.5 L436.2 461.3 L436.5 459.6 L436.9 457.4 L437.2 456.0 L437.6 454.4 L437.9 452.5 L438.3 451.8 L438.6 448.8 L439.0 447.5 L439.3 444.8 L439.7 443.7 L439.9 441.5 L440.2 438.8 L440.5 437.5 L440.7 435.1 L441.0 435.1 L441.3 432.7 L441.5 429.9 L441.8 428.8 L442.1 428.2 L442.3 424.1 L442.6 424.1 L442.9 421.3 L443.1 419.6 L443.4 418.6 L443.7 415.6 L443.9 414.0 L444.2 412.7 L444.5 411.6 L444.7 408.0 L445.0 407.5 L445.3 404.7 L447.0 406.3 L448.7 407.2 L450.5 407.6 L452.2 408.9 L453.8 409.5 L455.4 409.7 L457.0 410.9 L458.6 411.8 L460.2 414.5 L461.8 414.2 L463.4 415.9 L463.9 416.8 L464.4 418.3 L464.9 422.1 L465.4 423.9 L465.9 425.2 L466.4 426.0 L466.9 427.6 L467.4 429.5 L467.9 431.7 L468.4 432.7 L468.9 435.4 L469.1 437.1 L469.3 438.5 L469.5 442.2 L469.7 444.0 L469.9 444.8 L470.1 445.9 L470.3 449.6 L470.5 449.7 L470.7 451.7 L470.9 452.7 L471.1 455.5 L471.3 457.6 L471.5 459.5 L471.7 460.6 L471.9 463.3 L472.1 463.8 L472.3 466.3 L472.5 467.8 L472.7 470.4 L472.9 471.3 L473.1 474.4 L475.0 473.1 L476.8 473.9 L478.7 474.4 L479.4 472.0 L480.1 471.3 L480.8 469.5 L481.5 468.4 L482.2 466.4 L482.9 464.9 L483.6 463.7 L484.3 460.7 L485.0 458.9 L485.7 457.7 L486.0 457.1 L486.4 453.0 L486.8 452.7 L487.1 450.6 L487.5 447.2 L487.9 447.4 L488.3 445.7 L488.6 443.1 L489.0 441.6 L489.4 439.9 L489.7 436.3 L490.1 435.4 L490.5 433.5 L490.9 432.5 L491.2 429.8 L491.4 428.7 L491.6 426.9 L491.7 424.4 L491.9 423.3 L492.0 420.9 L492.2 419.0 L492.4 415.9 L492.5 413.5 L492.7 411.9 L492.9 410.6 L493.0 408.1 L493.2 408.1 L493.4 405.5 L493.5 403.8 L493.7 401.9 L493.8 400.1 L494.0 397.8 L495.4 399.1 L496.8 399.3 L498.2 402.7 L499.6 404.0 L501.0 404.7 L502.4 406.1 L504.7 406.2 L507.0 406.5 L509.3 406.1 L510.2 406.9 L511.0 410.6 L511.8 411.3 L512.7 412.8 L513.5 415.9 L514.1 417.1 L514.8 420.2 L515.4 420.7 L516.0 423.9 L516.6 426.4 L517.2 427.0 L517.9 428.6 L518.5 430.7 L519.1 432.6 L519.3 434.9 L519.5 437.0 L519.7 438.5 L519.9 440.4 L520.1 440.8 L520.3 442.8 L520.5 445.0 L520.7 448.1 L520.9 448.8 L521.1 451.3 L521.3 451.8 L521.5 453.7 L521.7 456.1 L521.9 459.0 L522.1 461.0 L522.3 462.8 L522.5 463.6 L522.7 466.1 L522.9 467.8 L523.1 469.7 L523.3 471.6 L524.9 472.0 L526.6 475.4 L528.3 475.0 L530.0 477.2 L531.1 476.8 L532.2 475.1 L533.3 471.0 L534.5 470.6 L535.6 469.9 L536.7 467.4 L537.0 466.8 L537.4 463.7 L537.7 461.4 L538.0 459.4 L538.3 459.5 L538.6 455.7 L539.0 454.9 L539.3 451.9 L539.6 451.1 L539.9 450.4 L540.3 446.4 L540.6 446.4 L540.9 443.7 L541.1 441.9 L541.2 441.1 L541.4 438.8 L541.6 435.7 L541.7 435.6 L541.9 432.7 L542.1 429.6 L542.2 427.7 L542.4 427.2 L542.6 425.2 L542.7 423.0 L542.9 420.7 L543.1 419.4 L543.2 417.5 L543.4 417.0 L543.6 413.0 L543.7 413.1 L543.9 411.5 L544.1 407.8 L544.2 408.1 L544.4 405.7 L544.6 404.3 L544.7 400.9 L544.9 399.3 L545.1 397.8 L546.9 398.9 L548.8 401.9 L550.6 401.9 L552.5 403.1 L554.4 403.4 L556.2 404.5 L558.1 405.1 L559.9 405.4 L561.8 407.5 L562.7 408.2 L563.5 411.9 L564.4 412.2 L565.3 415.6 L566.1 415.6 L567.0 417.4 L567.9 419.7 L568.8 421.5 L569.0 422.5 L569.3 424.8 L569.5 428.1 L569.8 429.8 L570.0 431.4 L570.3 432.8 L570.5 435.4 L570.8 437.3 L571.0 438.1 L571.3 440.4 L571.5 440.5 L571.8 444.1 L572.1 445.2 L572.3 447.8 L572.6 449.4 L572.8 450.3 L573.1 451.5 L573.3 455.6 L573.6 455.4 L573.8 458.1 L574.1 459.6 L574.3 461.9 L574.7 463.2 L575.1 466.2 L575.4 468.7 L575.8 468.7 L576.2 471.5 L576.6 472.5 L576.9 475.0 L577.3 476.4 L577.7 477.7 L578.0 479.5 L578.4 481.5 L578.8 485.2 L579.2 486.0 L579.5 487.1 L579.9 489.7 L580.2 488.9 L580.4 487.3 L580.7 484.1 L581.0 481.5 L581.2 479.8 L581.5 477.7 L581.7 476.5 L582.0 474.0 L582.3 472.6 L582.5 470.8 L582.8 469.8 L583.0 468.8 L583.3 466.6 L583.6 463.9 L583.8 462.1 L584.1 460.5 L585.5 458.7 L586.9 456.4 L588.3 454.9 L588.4 452.6 L588.5 450.1 L588.6 448.9 L588.7 448.8 L588.8 444.8 L589.0 444.0 L589.1 442.5 L589.2 441.3 L589.3 437.8 L589.4 436.1 L589.5 434.2 L589.7 432.8 L589.8 431.1 L589.9 430.6 L590.0 428.5 L590.1 426.8 L590.2 422.7 L590.4 420.9 L590.5 420.9 L590.6 419.5 L590.7 416.6 L590.8 415.1 L590.9 411.8 L591.1 411.0 L591.2 410.5 L591.3 408.4 L591.4 406.7 L591.5 405.2 L591.6 401.5 L591.7 399.3 L591.9 397.6 L592.0 396.7 L592.1 395.3 L592.2 394.2 L592.3 391.8 L592.4 389.4 L593.6 391.2 L594.8 392.9 L596.0 393.5 L597.2 395.1 L598.4 395.2 L599.6 398.5 L600.8 399.2 L601.6 400.1 L602.5 403.6 L603.3 404.6 L604.1 405.3 L605.0 406.6 L605.8 408.5 L606.7 411.2 L607.5 413.1 L608.3 413.2 L609.2 415.9 L609.7 416.6 L610.2 419.6 L610.8 421.6 L611.3 422.9 L611.8 424.3 L612.4 427.1 L612.9 427.4 L613.4 429.9 L614.0 432.2 L614.5 435.3 L615.1 436.3 L615.6 438.7 L616.1 439.6 L618.2 440.2 L620.3 441.0 L620.6 442.1 L620.8 444.0 L621.1 447.7 L621.3 448.8 L621.6 449.6 L621.8 450.7 L622.1 453.8 L622.3 456.1 L622.6 457.3 L622.8 458.7 L623.1 461.6 L623.3 464.1 L623.6 464.1 L623.9 465.5 L624.1 468.1 L624.4 470.1 L624.6 472.6 L624.9 473.2 L625.1 476.6 L625.4 478.3 L625.6 479.5 L625.9 481.4 L627.3 482.0 L628.7 485.4 L630.1 485.5 L630.4 483.2 L630.7 482.7 L631.0 479.4 L631.3 477.5 L631.7 477.1 L632.0 474.1 L632.3 474.0 L632.6 471.0 L633.0 468.3 L633.3 466.6 L633.6 465.3 L633.9 464.1 L634.2 461.9 L634.8 465.0 L635.4 464.8 L635.9 467.4 L636.5 468.9 L637.0 471.6 L637.4 471.0 L637.7 467.1 L638.0 465.0 L638.3 463.2 L638.7 462.3 L639.0 461.8 L639.3 460.0 L639.6 457.8 L640.0 456.7 L640.3 454.7 L640.6 451.3 L641.0 449.2 L641.3 449.3 L641.6 447.0 L641.9 443.3 L642.3 443.2 L642.6 441.0 L642.8 438.8 L643.1 436.9 L643.3 434.9 L643.5 432.7 L643.8 430.4 L644.0 429.2 L644.2 427.6 L644.5 427.3 L644.7 423.3 L644.9 423.6 L645.2 419.8 L645.4 418.3 L645.6 417.6 L645.8 415.8 L646.1 412.9 L646.3 410.1 L646.5 409.3 L646.8 407.2 L647.0 406.8 L647.2 403.0 L647.5 401.6 L647.7 401.1 L647.9 397.0 L648.2 396.4 L649.6 397.5 L651.0 400.0 L652.3 401.2 L653.7 400.8 L655.1 403.3 L656.5 403.5 L657.9 405.0 L659.3 408.6 L660.7 408.3 L662.1 410.9 L663.5 412.7 L664.9 413.1 L665.6 414.3 L666.4 415.8 L667.1 419.3 L667.9 420.1 L668.6 420.8 L669.3 423.7 L670.1 424.3 L670.8 425.9 L671.6 426.8 L672.3 430.5 L673.1 432.6 L673.8 433.5 L674.5 436.0 L675.3 435.3 L676.0 438.2 L676.1 439.3 L676.3 441.8 L676.4 444.9 L676.5 446.7 L676.6 447.1 L676.7 448.6 L676.8 450.9 L676.9 452.9 L677.0 455.8 L677.1 455.7 L677.3 459.2 L677.4 460.9 L677.5 462.9 L677.6 464.6 L677.7 466.0 L677.8 467.1 L677.9 469.0 L678.0 470.9 L678.1 473.8 L678.3 473.9 L678.4 476.0 L678.5 479.3 L678.6 479.8 L678.7 481.2 L678.8 484.1 L679.9 481.4 L680.9 481.1 L682.0 479.0 L683.0 479.1 L684.0 477.3 L685.1 476.0 L686.1 472.6 L687.2 471.6 L687.8 468.7 L688.3 466.8 L688.9 466.0 L689.5 464.7 L690.1 462.2 L690.7 459.8 L691.2 458.4 L691.8 457.1 L692.4 455.3 L693.0 453.7 L693.6 452.1 L694.1 449.3 L694.4 447.9 L694.6 444.7 L694.8 444.8 L695.1 441.5 L695.3 440.4 L695.5 438.1 L695.8 437.3 L696.0 434.0 L696.2 432.4 L696.5 430.5 L696.7 428.5 L696.9 428.6 L697.2 426.0 L697.4 423.5 L697.6 421.9 L697.9 421.6 L698.1 418.5 L698.3 416.0 L698.6 415.7 L698.8 413.5 L699.0 412.6 L699.3 408.4 L699.5 407.6 L699.7 406.7 L699.9 404.9 L700.2 403.3 L700.4 399.2 L700.6 398.1 L700.9 395.8 L701.1 395.0 L702.2 395.8 L703.3 399.6 L704.5 400.2 L705.6 402.8 L706.7 403.3 L708.3 404.0 L709.9 406.3 L711.5 406.2 L713.1 406.7 L714.6 409.0 L716.2 410.5 L717.8 410.3 L718.1 411.1 L718.4 414.3 L718.7 416.2 L718.9 417.0 L719.2 419.3 L719.5 420.5 L719.8 422.5 L720.1 424.5 L720.3 427.3 L720.6 429.3 L720.9 430.0 L721.2 431.3 L721.4 434.0 L721.7 436.8 L722.0 438.2 L723.9 437.9 L725.8 438.0 L727.7 437.9 L729.5 438.4 L731.4 438.2 L733.3 437.8 L735.2 437.8 L737.1 438.1 L739.0 438.2 L740.9 438.3 L742.7 437.8 L744.6 437.9 L746.5 438.3 L748.4 438.1 L750.3 438.0 L752.2 438.0 L754.0 438.2 L756.8 439.6 L757.0 442.6 L757.1 442.8 L757.3 445.4 L757.4 446.7 L757.5 448.7 L757.7 451.8 L757.8 454.0 L757.9 454.3 L758.1 455.7 L758.2 459.0 L758.4 459.5 L758.5 460.8 L758.6 465.1 L758.8 465.7 L758.9 468.6 L759.1 469.4 L759.2 472.5 L759.3 473.3 L759.5 474.4 L759.6 477.2 L759.9 477.8 L760.1 481.0 L760.4 483.1 L760.6 485.7 L760.9 485.4 L761.1 488.6 L761.4 489.8 L761.6 492.0 L761.9 493.9 L762.4 491.2 L763.0 489.8 L763.5 488.6 L764.1 487.9 L764.6 484.0 L765.2 483.2 L765.8 482.3 L766.3 480.9 L766.9 477.2 L767.4 475.2 L768.0 474.4 L768.3 473.8 L768.6 472.0 L768.9 469.0 L769.2 466.1 L769.5 466.5 L769.8 463.4 L770.1 462.9 L770.4 460.4 L770.7 459.1 L771.0 455.6 L771.3 455.4 L771.6 452.2 L771.9 450.9 L772.2 449.3 L772.3 448.4 L772.4 446.6 L772.5 443.1 L772.7 441.4 L772.8 440.0 L772.9 438.5 L773.0 436.4 L773.1 433.9 L773.3 432.4 L773.4 431.9 L773.5 430.5 L773.6 426.5 L773.8 426.0 L773.9 424.7 L774.0 421.1 L774.1 421.3 L774.2 417.7 L774.4 417.1 L774.5 415.2 L774.6 413.6 L774.7 410.9 L774.9 409.4 L775.0 408.1 L775.1 405.9 L775.2 404.7 L775.4 402.3 L775.5 400.5 L775.6 397.6 L775.7 397.3 L775.8 395.2 L776.0 392.7 L776.1 392.3 L776.2 390.5 L776.3 388.0 L778.1 389.3 L779.8 390.0 L781.6 392.1 L783.3 393.6 L784.8 393.7 L786.4 394.9 L787.9 396.8 L789.4 397.0 L791.0 399.0 L792.5 400.3 L794.0 400.2 L795.6 402.9 L797.1 402.5 L798.6 404.7 L798.8 407.2 L799.0 409.1 L799.3 410.2 L799.5 410.8 L799.7 413.8 L799.9 415.3 L800.1 418.6 L800.3 418.3 L800.5 422.0 L800.7 424.1 L800.9 425.3 L801.1 427.3 L801.3 427.5 L801.6 431.3 L801.8 431.9 L802.0 434.9 L802.2 436.6 L802.4 436.5 L802.6 439.9 L802.8 442.1 L803.0 441.6 L803.2 444.2 L803.4 447.1 L803.6 447.3 L803.9 451.0 L804.1 451.2 L804.3 454.5 L804.5 454.5 L804.7 457.3 L804.9 460.2 L805.1 460.1 L805.3 462.1 L805.5 464.5 L805.7 465.8 L805.9 466.9 L806.2 469.1 L806.4 470.9 L806.6 474.7 L806.8 475.8 L807.0 477.2 L808.1 476.5 L809.2 473.0 L810.3 472.9 L811.4 469.5 L812.6 468.8 L813.0 467.0 L813.5 465.5 L814.0 462.9 L814.4 462.4 L814.9 459.7 L815.3 457.9 L815.8 456.8 L816.3 452.9 L816.7 453.4 L817.2 450.6 L817.7 448.1 L818.1 446.5 L818.7 445.6 L819.2 442.4 L819.7 442.6 L820.2 439.8 L820.7 437.5 L821.3 436.8 L821.8 434.2 L822.3 431.8 L822.8 431.5 L823.4 427.9 L823.9 428.2 L824.4 425.0 L824.9 424.3 L825.4 423.4 L826.0 420.6 L826.5 418.7 L828.2 418.0 L830.0 416.1 L831.7 414.2 L833.5 414.5 L834.9 414.7 L836.2 416.4 L837.6 419.0 L839.0 419.9 L840.4 421.5 L841.5 423.1 L842.5 425.7 L843.6 425.4 L844.6 427.2 L845.6 430.0 L846.7 430.0 L847.7 431.5 L848.8 434.1 L849.8 435.1 L850.9 437.3 L851.9 438.6 L853.0 441.0 L853.2 443.0 L853.4 444.9 L853.7 445.8 L853.9 448.7 L854.1 450.2 L854.4 451.2 L854.6 455.1 L854.8 455.1 L855.1 456.8 L855.3 458.5 L855.5 461.7 L855.7 464.2 L856.0 465.8 L856.2 466.7 L856.4 468.2 L856.7 469.4 L856.9 472.9 L857.1 474.4 L857.8 476.4 L858.5 477.7 L859.2 480.3 L859.9 481.7 L860.6 484.8 L861.3 485.5 L862.5 484.6 L863.8 481.7 L865.0 481.9 L866.2 478.1 L867.4 477.8 L868.6 475.9 L869.9 473.9 L871.1 473.0 L871.3 470.0 L871.6 470.1 L871.8 466.3 L872.0 465.8 L872.3 465.0 L872.5 461.1 L872.8 459.4 L873.0 458.7 L873.2 456.6 L873.5 455.1 L873.7 453.7 L874.0 450.2 L874.2 448.8 L874.4 446.9 L874.7 444.4 L874.9 444.8 L875.2 442.7 L875.4 440.7 L875.6 437.0 L875.9 437.4 L876.1 435.3 L876.4 432.7 L876.6 431.6 L876.8 429.1 L877.1 426.6 L877.3 424.5 L877.6 423.0 L877.8 420.7 L878.0 420.1 L878.5 417.8 L878.9 417.1 L879.3 415.1 L879.8 413.7 L880.2 411.5 L880.6 408.5 L881.0 407.4 L881.5 405.3 L881.9 404.4 L882.3 401.9 L882.8 399.4 L883.2 398.6 L883.6 396.4 L885.0 399.0 L886.4 398.4 L887.8 401.5 L889.2 400.7 L890.6 403.3 L892.3 402.0 L894.1 401.3 L895.8 401.9 L897.5 400.6 L897.8 403.5 L898.1 404.8 L898.4 405.5 L898.7 408.7 L899.0 409.0 L899.3 410.6 L899.5 414.1 L899.8 415.2 L900.1 417.1 L900.4 418.8 L900.7 421.4 L901.0 421.9 L901.3 424.7 L901.5 426.1 L901.8 428.3 L902.1 429.0 L902.4 431.5 L902.7 432.9 L903.0 434.0 L903.3 435.5 L903.5 438.4 L903.8 438.8 L904.1 442.7 L904.4 442.5 L904.7 444.0 L905.0 446.0 L905.3 449.9 L905.5 450.2 L905.8 451.4 L906.1 452.9 L906.4 454.7 L906.7 458.2 L907.0 459.8 L907.3 461.8 L907.5 463.7 L907.8 463.7 L908.1 466.9 L908.4 468.1 L908.7 470.2 L910.1 469.8 L911.5 468.7 L912.9 467.6 L914.3 464.3 L915.7 465.2 L917.0 464.1 L918.4 461.9 L919.0 461.2 L919.6 457.2 L920.1 455.7 L920.7 453.6 L921.2 451.6 L921.8 451.9 L922.3 450.0 L922.9 447.7 L923.5 446.4 L924.0 443.7 L924.2 442.2 L924.4 439.5 L924.6 437.2 L924.8 435.4 L925.0 435.2 L925.2 432.0 L925.3 430.4 L925.5 428.9 L925.7 426.0 L925.9 424.7 L926.1 423.0 L926.3 422.3 L926.5 419.5 L926.7 417.6 L926.9 417.4 L927.1 414.4 L927.2 413.4 L927.4 411.0 L927.6 407.6 L927.8 406.8 L928.0 405.0 L928.2 403.3 L930.5 404.5 L932.8 403.9 L935.2 404.7 L935.3 407.1 L935.5 408.5 L935.6 409.6 L935.8 413.1 L935.9 413.0 L936.1 416.7 L936.2 416.9 L936.4 418.3 L936.6 420.7 L936.7 424.0 L936.9 426.4 L937.0 425.7 L937.2 428.9 L937.3 430.7 L937.5 433.4 L937.6 433.6 L937.8 436.3 L937.9 438.2 L939.8 438.0 L941.6 438.5 L943.4 438.0 L945.3 438.6 L947.1 438.0 L948.9 437.9 L950.8 438.4 L952.6 438.2 L954.5 437.8 L956.3 438.3 L958.1 437.8 L960.0 438.2 L961.9 438.4 L963.8 438.3 L965.7 438.4 L967.7 438.3 L969.6 438.0 L971.5 438.1 L973.5 438.1 L975.4 438.5 L977.3 437.8 L979.3 438.2 L979.4 441.0 L979.5 440.6 L979.6 442.9 L979.7 444.8 L979.9 448.3 L980.0 449.1 L980.1 450.6 L980.2 453.7 L980.3 453.8 L980.5 456.2 L980.6 458.2 L980.7 460.6 L980.8 462.5 L981.0 464.0 L981.1 465.0 L981.2 466.8 L981.3 468.2 L981.4 471.8 L981.6 473.1 L981.7 475.1 L981.8 475.5 L981.9 478.0 L982.0 480.0 L983.0 482.5 L983.9 483.9 L984.8 485.5 L985.8 483.0 L986.8 482.3 L987.8 481.8 L988.8 478.5 L989.8 476.8 L990.8 475.5 L991.8 474.4 L992.6 473.2 L993.5 471.9 L994.3 468.5 L995.1 466.8 L996.0 466.0 L996.1 463.5 L996.3 461.9 L996.5 460.5 L996.7 457.7 L996.8 456.3 L997.0 454.1 L997.2 454.3 L997.4 451.8 L997.5 448.3 L997.7 448.7 L997.9 444.6 L998.1 443.4 L998.2 443.1 L998.4 440.8 L998.6 438.8 L998.8 436.1 L998.9 433.7 L999.1 433.0 L999.3 429.7 L999.5 428.1 L999.6 426.7 L999.8 424.0 L1000.0 423.0 L1000.2 421.5 L1000.5 420.4 L1000.8 418.4 L1001.0 416.1 L1001.3 414.6 L1001.6 412.4 L1001.9 409.8 L1002.2 409.2 L1002.5 406.9 L1002.8 406.0 L1003.1 404.6 L1003.4 401.6 L1003.7 400.1 L1004.0 398.8 L1004.3 396.4 L1006.7 396.6 L1009.0 396.6 L1011.3 397.8 L1013.0 399.0 L1014.8 400.1 L1016.5 400.6 L1018.3 400.6 L1019.7 402.5 L1021.1 404.3 L1022.4 405.2 L1023.8 406.1 L1024.3 408.3 L1024.8 409.5 L1025.2 410.9 L1025.7 413.5 L1026.2 413.9 L1026.6 416.5 L1027.1 419.2 L1027.6 420.8 L1028.0 422.3 L1028.5 423.1 L1028.9 425.3 L1029.4 427.2 L1029.9 429.4 L1030.3 430.6 L1030.8 432.6 L1031.0 434.9 L1031.2 437.4 L1031.3 437.3 L1031.5 440.3 L1031.7 442.5 L1031.9 443.3 L1032.0 445.4 L1032.2 448.5 L1032.4 447.9 L1032.6 451.0 L1032.7 451.9 L1032.9 455.3 L1033.1 457.6 L1033.3 458.3 L1033.4 459.1 L1033.6 462.1 L1033.8 463.9 L1034.0 466.2 L1034.1 467.4 L1034.9 465.7 L1035.6 464.2 L1036.3 462.9 L1037.0 460.3 L1037.7 458.2 L1038.4 457.8 L1039.2 454.9 L1039.5 452.3 L1039.8 451.7 L1040.1 449.0 L1040.4 448.1 L1040.7 444.6 L1041.0 445.0 L1041.3 441.5 L1041.6 438.9 L1041.9 438.2 L1044.0 437.6 L1046.1 437.9 L1048.2 436.9 L1050.3 438.0 L1052.4 438.0 L1054.5 438.2 L1054.6 436.9 L1054.7 434.1 L1054.8 432.1 L1054.9 430.2 L1055.0 429.7 L1055.1 428.4 L1055.2 425.5 L1055.3 422.9 L1055.5 422.6 L1055.6 419.7 L1055.7 417.4 L1055.8 415.3 L1055.9 414.5 L1057.3 417.1 L1058.7 419.0 L1060.1 420.1 L1061.7 421.6 L1063.3 422.3 L1064.9 423.7 L1066.6 424.0 L1068.2 427.1 L1069.8 427.0 L1070.6 428.3 L1071.5 430.7 L1072.3 432.9 L1073.2 434.5 L1074.0 435.3 L1074.8 436.5 L1075.7 438.9 L1076.5 439.4 L1077.3 442.9 L1078.2 443.7 L1078.7 445.2 L1079.2 448.3 L1079.6 448.5 L1080.1 450.6 L1080.6 452.1 L1081.1 454.4 L1081.6 455.5 L1082.1 456.9 L1082.6 460.5 L1083.1 461.2 L1083.6 462.9 L1084.1 464.9 L1084.6 467.1 L1085.1 468.8 L1085.5 471.1 L1086.0 473.0 L1086.5 474.4 L1087.2 472.3 L1087.9 472.0 L1088.6 470.1 L1089.3 466.3 L1090.0 466.5 L1090.7 465.0 L1091.4 462.9 L1092.1 459.5 L1092.8 459.6 L1093.5 457.3 L1094.2 454.0 L1094.9 453.5 L1095.4 450.4 L1095.8 451.0 L1096.3 448.3 L1096.7 445.4 L1097.2 443.2 L1097.7 441.4 L1098.1 439.8 L1098.6 439.4 L1099.1 436.4 L1099.5 434.0 L1100.0 434.1 L1100.5 432.0 L1100.9 428.5 L1101.4 428.5 L1101.9 425.6 L1103.8 425.1 L1105.8 424.7 L1107.7 423.6 L1109.7 423.3 L1111.6 421.5 L1113.2 423.1 L1114.9 424.2 L1116.5 423.5 L1118.1 425.7 L1119.7 426.2 L1121.4 427.0 L1122.6 429.0 L1123.8 429.7 L1125.0 432.2 L1126.2 432.7 L1127.5 433.4 L1128.7 434.7 L1129.9 435.8 L1131.1 438.2 L1131.3 440.0 L1131.4 440.6 L1131.6 443.5 L1131.8 444.5 L1131.9 447.2 L1132.1 449.0 L1132.3 450.9 L1132.4 453.5 L1132.6 453.1 L1132.7 457.1 L1132.9 457.9 L1133.1 460.0 L1133.2 462.0 L1133.4 464.3 L1133.6 464.9 L1133.7 466.8 L1133.9 468.8 L1134.5 468.2 L1135.1 464.0 L1135.8 463.6 L1136.4 461.7 L1137.0 458.3 L1137.6 458.0 L1138.2 456.3 L1138.8 455.1 L1139.5 452.1 L1140.7 450.1 L1141.9 450.2 L1143.1 447.4 L1144.2 445.7 L1145.4 445.2 L1146.6 441.3 L1147.8 441.0 L1148.5 439.7 L1149.1 437.7 L1149.7 435.2 L1150.4 434.8 L1151.0 431.7 L1151.6 430.3 L1152.3 428.6 L1152.9 427.5 L1153.5 424.2 L1154.2 423.1 L1154.8 421.5 L1156.6 421.4 L1158.4 422.0 L1160.2 422.9 L1162.0 421.7 L1163.7 423.3 L1165.5 422.4 L1167.3 422.8 L1168.5 424.2 L1169.7 425.0 L1170.9 427.0 L1172.1 429.7 L1173.3 430.2 L1174.5 432.0 L1175.7 432.6 L1175.9 433.9 L1176.1 435.7 L1176.3 437.4 L1176.5 440.0 L1176.7 441.9 L1176.9 444.1 L1177.1 443.9 L1177.3 447.5 L1177.5 449.7 L1177.7 450.6 L1177.9 451.1 L1178.1 453.6 L1178.3 454.6 L1178.5 456.9 L1178.7 460.6 L1178.9 461.5 L1179.1 463.5 L1179.3 465.6 L1179.5 467.7 L1179.7 468.7 L1179.9 470.2 L1180.6 468.9 L1181.4 467.2 L1182.1 465.8 L1182.9 463.9 L1183.7 462.5 L1184.4 459.6 L1185.2 459.1 L1185.9 456.9 L1186.7 456.1 L1187.5 452.7 L1188.2 452.1 L1188.7 449.5 L1189.2 447.4 L1189.7 447.5 L1190.3 446.1 L1190.8 443.6 L1191.3 441.1 L1191.8 440.5 L1192.3 438.7 L1192.8 436.3 L1193.3 433.7 L1193.8 432.6 L1195.5 430.7 L1197.3 429.6 L1199.0 427.9 L1200.8 427.0 L1201.3 425.0 L1201.9 423.8 L1202.4 422.7 L1203.0 418.6 L1203.6 418.1 L1204.1 415.0 L1204.7 413.4 L1205.2 413.3 L1205.8 410.9 L1206.3 408.9 L1207.3 411.6 L1208.2 412.0 L1209.1 412.5 L1210.1 415.1 L1211.0 417.3 L1211.9 418.7 L1212.2 421.6 L1212.5 423.5 L1212.8 424.0 L1213.1 425.6 L1213.4 426.6 L1213.7 429.8 L1214.0 430.5 L1214.3 432.1 L1214.6 433.5 L1214.9 435.3 L1215.2 438.8 L1215.5 439.2 L1215.8 443.2 L1216.1 443.7 L1217.5 440.8 L1218.9 441.0 L1220.3 438.2 L1222.1 437.8 L1224.0 437.7 L1225.8 438.4 L1227.7 437.9 L1229.6 438.4 L1231.4 437.9 L1233.3 437.8 L1235.1 438.4 L1237.0 438.4 L1238.8 438.5 L1240.7 438.4 L1242.6 437.8 L1244.4 438.3 L1246.3 438.4 L1248.1 438.1 L1250.0 438.6 L1251.8 437.9 L1253.7 438.6 L1255.6 438.4 L1257.4 437.7 L1259.3 437.7 L1261.1 438.3 L1263.0 438.5 L1264.9 438.2 L1266.7 438.5 L1268.6 440.5 L1270.4 442.3 L1270.6 444.8 L1270.9 445.1 L1271.1 448.8 L1271.3 449.6 L1271.5 450.4 L1271.7 453.0 L1272.0 455.4 L1272.2 456.9 L1272.4 459.3 L1272.6 459.8 L1272.8 463.3 L1273.1 464.0 L1273.3 466.6 L1273.5 468.3 L1273.7 469.6 L1273.9 471.4 L1274.2 474.3 L1274.4 476.5 L1274.6 477.2 L1276.0 476.5 L1277.4 474.6 L1278.8 472.5 L1280.2 471.6 L1280.8 468.6 L1281.4 469.1 L1282.0 466.6 L1282.7 465.0 L1283.3 461.9 L1283.9 460.7 L1284.5 459.8 L1285.1 457.6 L1285.7 454.9 L1286.0 453.3 L1286.2 450.7 L1286.4 449.2 L1286.6 448.5 L1286.9 445.4 L1287.1 444.3 L1287.3 442.3 L1287.5 441.2 L1287.8 439.1 L1288.0 435.9 L1288.2 433.4 L1288.4 432.2 L1288.6 430.8 L1288.9 429.4 L1289.1 428.1 L1289.3 426.5 L1289.5 422.4 L1289.8 422.7 L1290.0 420.8 L1290.2 419.1 L1290.4 416.5 L1290.7 413.8 L1290.9 413.5 L1291.1 411.6 L1291.3 408.9 L1293.1 408.3 L1294.8 407.9 L1296.5 405.4 L1298.3 404.7 L1300.3 403.9 L1302.3 405.3 L1304.3 406.1 L1306.2 404.8 L1308.2 406.4 L1310.2 407.1 L1312.2 406.1 L1312.9 407.2 L1313.6 409.9 L1314.3 411.8 L1315.0 413.0 L1315.7 414.1 L1316.4 415.9 L1317.1 419.0 L1317.8 420.8 L1318.5 421.7 L1319.2 422.5 L1319.9 426.1 L1320.6 427.0 L1320.8 429.6 L1321.0 430.0 L1321.2 432.7 L1321.4 435.3 L1321.6 437.1 L1321.9 438.0 L1322.1 439.7 L1322.3 441.8 L1322.5 442.6 L1322.7 444.4 L1322.9 446.2 L1323.1 449.4 L1323.4 450.4 L1323.6 452.7 L1323.8 454.1 L1324.0 456.2 L1324.2 457.1 L1324.4 458.6 L1324.6 462.9 L1324.9 463.1 L1325.1 464.3 L1325.3 467.4 L1325.5 469.7 L1325.7 469.9 L1325.9 472.8 L1326.1 474.4 L1328.2 473.3 L1330.3 473.0 L1332.4 471.1 L1334.5 471.6 L1334.9 468.5 L1335.2 469.2 L1335.6 467.0 L1335.9 464.1 L1336.2 462.5 L1336.6 459.8 L1336.9 459.3 L1337.3 456.6 L1337.6 456.0 L1338.0 453.7 L1338.3 452.0 L1338.7 449.3 L1338.9 448.7 L1339.1 445.0 L1339.2 442.7 L1339.4 441.3 L1339.6 439.4 L1339.8 437.3 L1340.0 435.4 L1340.1 434.9 L1340.3 433.9 L1340.5 431.0 L1340.7 430.5 L1340.9 428.6 L1341.0 424.6 L1341.2 424.1 L1341.4 421.8 L1341.6 419.3 L1341.8 419.6 L1342.0 416.0 L1342.1 415.0 L1342.3 413.3 L1342.5 412.3 L1342.7 409.8 L1342.9 407.5 L1343.4 405.4 L1344.0 403.8 L1344.5 401.2 L1345.1 401.5 L1345.7 399.7 L1346.2 395.9 L1346.8 393.6 L1347.3 392.4 L1347.9 390.8 L1348.4 389.4 L1349.6 392.0 L1350.8 393.6 L1352.0 395.1 L1353.2 394.6 L1354.4 398.1 L1355.6 399.5 L1356.8 400.6 L1358.7 401.2 L1360.5 402.3 L1362.4 400.1 L1364.2 400.6 L1366.1 402.4 L1367.9 401.9 L1368.4 404.9 L1368.9 406.0 L1369.4 406.8 L1369.9 409.4 L1370.4 411.6 L1370.9 411.7 L1371.4 414.0 L1371.9 415.6 L1372.4 417.1 L1372.9 419.8 L1373.4 420.8 L1373.9 422.8 L1374.4 424.3 L1374.9 427.0 L1375.1 429.3 L1375.3 429.4 L1375.5 433.1 L1375.7 433.5 L1375.9 434.9 L1376.1 439.1 L1376.3 439.1 L1376.4 442.8 L1376.6 444.4 L1376.8 446.3 L1377.0 446.2 L1377.2 448.8 L1377.4 449.7 L1377.6 453.7 L1377.8 455.3 L1378.0 456.6 L1378.2 457.9 L1378.4 459.5 L1378.6 462.5 L1378.8 463.5 L1378.9 465.7 L1379.1 466.3 L1379.3 468.3 L1379.5 469.7 L1379.7 473.2 L1379.9 474.6 L1380.1 475.4 L1380.3 479.1 L1380.5 480.0 L1380.9 481.2 L1381.4 483.4 L1381.9 484.6 L1382.3 486.8 L1382.8 490.1 L1383.3 491.1 L1383.9 488.8 L1384.5 486.5 L1385.1 485.5 L1385.7 483.2 L1386.4 482.9 L1387.0 479.0 L1387.6 479.4 L1388.2 475.1 L1388.8 474.4 L1389.6 473.6 L1390.4 471.2 L1391.1 468.9 L1391.4 466.3 L1391.7 465.1 L1391.9 462.8 L1392.2 460.8 L1392.5 458.8 L1392.7 457.4 L1393.0 457.2 L1393.3 455.3 L1393.5 453.3 L1393.8 449.3 L1394.1 447.9 L1394.3 447.6 L1394.6 443.6 L1394.9 443.5 L1395.1 440.5 L1395.4 440.4 L1395.7 436.0 L1395.9 436.2 L1396.2 433.2 L1396.5 430.8 L1396.7 429.9 L1397.0 426.7 L1397.3 427.0 L1397.5 424.4 L1397.8 421.6 L1398.1 420.4 L1398.3 419.8 L1398.6 416.1 L1398.8 415.2 L1399.1 412.2 L1399.4 410.4 L1399.6 410.1 L1399.9 408.1 L1400.2 404.9 L1400.4 402.8 L1400.7 400.9 L1401.0 400.4 L1401.2 398.3 L1401.5 395.8 L1401.8 393.8 L1402.0 393.0 L1402.3 390.8 L1404.2 390.0 L1406.0 388.9 L1407.9 386.7 L1409.6 387.7 L1411.4 387.6 L1413.1 388.1 L1414.8 390.7 L1416.6 390.8 L1418.3 392.5 L1420.1 391.6 L1421.8 393.6 L1422.5 396.1 L1423.2 396.5 L1423.9 399.5 L1424.6 401.3 L1425.3 402.0 L1426.0 402.4 L1426.7 406.4 L1427.4 406.9 L1428.1 409.6 L1428.8 410.3 L1429.1 411.6 L1429.3 413.2 L1429.6 416.8 L1429.9 417.4 L1430.2 418.8 L1430.5 421.2 L1430.7 423.6 L1431.0 423.9 L1431.3 427.1 L1431.6 428.8 L1431.8 430.8 L1432.1 431.7 L1432.4 435.1 L1432.7 437.2 L1433.0 438.2 L1433.3 441.0 L1433.7 441.5 L1434.0 444.3 L1434.4 445.3 L1434.7 448.2 L1435.1 448.2 L1435.4 452.2 L1435.7 454.3 L1436.1 454.9 L1436.4 456.8 L1436.8 458.7 L1437.1 460.5 L1437.4 462.4 L1437.6 462.9 L1437.9 467.1 L1438.1 467.0 L1438.4 468.7 L1438.6 470.3 L1438.9 472.5 L1439.1 475.8 L1439.4 475.5 L1439.6 477.5 L1439.8 480.9 L1440.1 481.4 L1440.3 482.7 L1440.6 486.0 L1440.8 487.8 L1441.1 489.4 L1441.3 491.2 L1442.7 489.9 L1444.1 486.4 L1445.5 485.6 L1446.0 484.8 L1446.5 482.6 L1447.0 479.1 L1447.5 477.5 L1448.0 476.6 L1448.5 474.9 L1449.0 472.5 L1449.5 470.3 L1450.0 469.2 L1450.5 466.7 L1451.0 466.1 L1451.5 465.0 L1452.0 461.4 L1452.5 460.5 L1452.6 458.9 L1452.8 457.6 L1453.0 454.2 L1453.1 454.2 L1453.3 452.6 L1453.5 449.4 L1453.6 447.7 L1453.8 447.0 L1453.9 444.4 L1454.1 442.2 L1454.3 441.8 L1454.4 439.6 L1454.6 436.7 L1454.8 434.6 L1454.9 433.0 L1455.1 431.5 L1455.3 431.1 L1455.4 428.8 L1455.6 427.3 L1455.8 425.3 L1455.9 423.5 L1456.1 419.7 L1456.2 419.1 L1456.4 418.4 L1456.6 416.6 L1456.7 413.0 L1456.9 411.6 L1457.1 410.4 L1457.2 407.9 L1457.4 406.5 L1457.6 403.5 L1457.7 402.6 L1457.9 401.0 L1458.0 399.2 L1459.2 396.3 L1460.3 394.9 L1461.4 395.4 L1462.5 393.2 L1463.6 390.8 L1465.4 392.8 L1467.2 392.8 L1469.0 394.0 L1470.8 395.0 L1472.6 395.8 L1474.4 394.4 L1476.2 396.4 L1476.5 398.6 L1476.7 399.4 L1477.0 402.3 L1477.3 403.0 L1477.6 405.5 L1477.9 408.3 L1478.2 409.3 L1478.5 410.2 L1478.8 412.7 L1479.1 414.2 L1479.4 417.4 L1479.7 417.5 L1479.9 419.3 L1480.2 422.0 L1480.5 422.4 L1480.8 425.5 L1481.1 428.2 L1481.4 428.9 L1481.7 430.0 L1482.0 432.3 L1482.3 434.3 L1482.6 435.1 L1482.8 436.8 L1483.1 439.6 L1485.0 439.3 L1486.9 439.4 L1488.7 439.5 L1490.6 439.4 L1492.4 439.4 L1494.3 439.2 L1496.1 439.7 L1498.0 439.9 L1499.9 439.7 L1501.7 439.7 L1503.6 439.8 L1505.4 439.3 L1507.3 439.8 L1509.2 439.6 L1511.0 439.7 L1512.9 439.7 L1514.7 439.6 L1516.6 439.6 L1518.6 438.7 L1520.6 438.2 L1522.6 437.7 L1524.5 438.1 L1526.5 437.3 L1528.5 437.5 L1530.5 436.8 L1532.4 436.0 L1534.2 437.4 L1536.1 439.2 L1538.0 438.0 L1539.8 439.3 L1541.7 439.6 L1543.5 439.5 L1545.4 441.8 L1547.2 441.0 L1547.4 438.7 L1547.6 438.1 L1547.8 434.7 L1548.0 432.7 L1548.2 433.0 L1548.4 430.1 L1548.6 427.3 L1548.8 426.4 L1549.0 424.7 L1549.2 423.7 L1549.4 420.3 L1549.6 418.8 L1549.8 418.9 L1550.0 416.5 L1550.2 413.2 L1550.4 411.9 L1550.6 410.2 L1550.8 409.2 L1551.0 407.3 L1551.2 406.1 L1551.4 404.2 L1551.6 401.6 L1551.8 400.4 L1552.0 398.6 L1552.2 396.9 L1552.4 394.4 L1552.6 393.4 L1552.8 390.8 L1554.7 391.4 L1556.5 391.9 L1558.4 390.8 L1559.9 391.1 L1561.5 394.3 L1563.0 393.3 L1564.6 396.5 L1566.1 397.3 L1567.7 398.3 L1569.2 400.7 L1570.8 400.9 L1572.3 402.0 L1572.7 403.6 L1573.0 406.3 L1573.4 408.4 L1573.7 409.5 L1574.1 410.7 L1574.4 412.7 L1574.8 414.6 L1575.1 417.1 L1575.5 417.8 L1575.8 419.8 L1576.2 422.1 L1576.5 423.4 L1576.9 425.1 L1577.2 428.1 L1577.6 430.1 L1577.9 431.0 L1578.3 432.6 L1578.6 433.8 L1579.0 435.9 L1579.3 438.2 L1581.0 438.0 L1582.8 439.8 L1584.5 440.5 L1586.3 441.0 L1586.4 441.8 L1586.6 445.8 L1586.7 446.1 L1586.9 449.3 L1587.0 451.2 L1587.2 453.4 L1587.4 453.2 L1587.5 455.7 L1587.7 458.8 L1587.8 458.3 L1588.0 460.3 L1588.1 463.5 L1588.3 465.2 L1588.4 468.1 L1588.6 469.6 L1588.7 470.8 L1588.9 473.9 L1589.1 474.5 L1589.2 476.4 L1589.4 478.7 L1589.5 479.7 L1589.7 481.5 L1589.8 484.0 L1590.0 485.2 L1590.1 488.6 L1590.3 489.8 L1590.5 491.2 L1591.6 489.9 L1592.8 487.4 L1593.9 486.7 L1595.1 485.4 L1596.3 484.4 L1597.4 482.8 L1597.9 481.2 L1598.4 480.1 L1598.8 478.5 L1599.3 475.4 L1599.7 473.4 L1600.2 472.0 L1600.7 471.1 L1601.1 467.5 L1601.6 466.2 L1602.1 465.1 L1602.5 461.5 L1603.0 460.5 L1603.2 458.2 L1603.4 458.0 L1603.6 455.8 L1603.8 453.1 L1604.0 450.2 L1604.2 450.4 L1604.4 448.0 L1604.6 446.5 L1604.8 445.1 L1605.0 442.9 L1605.2 439.9 L1605.4 437.3 L1605.6 435.8 L1605.8 434.5 L1606.0 432.7 L1606.2 430.0 L1606.4 428.1 L1606.6 427.4 L1606.8 425.5 L1607.0 423.0 L1607.2 421.5 L1607.4 421.0 L1607.6 418.2 L1607.8 414.9 L1608.0 414.0 L1608.2 413.2 L1608.4 410.1 L1608.6 409.3 L1608.9 405.7 L1609.1 404.7 L1609.3 404.3 L1609.5 401.8 L1609.7 400.2 L1609.9 397.2 L1610.1 396.1 L1610.3 394.5 L1610.5 391.9 L1610.7 391.1 L1610.9 389.0 L1611.1 388.4 L1611.4 385.3 L1613.2 384.1 L1615.1 382.2 L1616.9 381.1 L1618.1 381.5 L1619.3 383.0 L1620.5 385.9 L1621.7 385.6 L1622.9 387.0 L1624.1 388.6 L1625.3 390.8 L1626.2 392.6 L1627.0 395.1 L1627.9 396.3 L1628.7 398.5 L1629.6 398.3 L1630.4 399.9 L1631.3 403.5 L1632.2 404.1 L1633.0 406.8 L1633.9 407.6 L1634.7 408.8 L1635.6 410.8 L1636.4 413.1 L1636.7 414.0 L1637.0 417.9 L1637.3 418.9 L1637.6 420.2 L1637.8 422.3 L1638.1 424.0 L1638.4 425.0 L1638.7 429.0 L1639.0 430.1 L1639.2 432.9 L1639.5 433.4 L1639.8 435.7 L1640.1 436.6 L1640.3 438.0 L1640.6 441.0 L1640.8 444.0 L1640.9 445.6 L1641.1 446.1 L1641.2 449.5 L1641.4 451.1 L1641.6 451.6 L1641.7 454.3 L1641.9 457.1 L1642.0 457.7 L1642.2 460.8 L1642.3 460.8 L1642.5 463.0 L1642.6 465.7 L1642.8 466.3 L1643.0 468.4 L1643.1 471.7 L1643.3 472.6 L1643.4 475.2 L1643.6 475.7 L1643.7 477.3 L1643.9 479.7 L1644.0 481.1 L1644.2 485.0 L1644.3 485.1 L1644.5 487.6 L1644.7 488.3 L1644.8 491.2 L1645.6 492.9 L1646.5 494.2 L1647.3 496.0 L1648.2 496.7 L1649.0 498.6 L1649.8 502.1 L1650.7 502.5 L1651.5 503.9 L1652.3 505.4 L1653.2 507.9 L1654.6 506.0 L1656.0 504.4 L1657.4 502.5 L1658.7 502.3 L1659.0 500.9 L1659.3 498.2 L1659.5 495.9 L1659.8 495.4 L1660.1 492.0 L1660.3 490.6 L1660.6 490.2 L1660.9 486.5 L1661.1 485.5 L1661.4 484.6 L1661.7 482.7 L1661.9 479.1 L1662.2 477.8 L1662.5 476.9 L1662.7 474.1 L1663.0 473.8 L1663.3 470.0 L1663.5 470.1 L1663.8 467.0 L1664.1 464.5 L1664.3 463.3 L1664.4 461.4 L1664.5 458.7 L1664.7 458.4 L1664.8 455.4 L1664.9 455.3 L1665.0 452.7 L1665.1 450.3 L1665.2 448.2 L1665.3 447.3 L1665.4 444.4 L1665.5 444.3 L1665.7 440.6 L1665.8 439.8 L1665.9 438.1 L1666.0 435.5 L1666.1 435.0 L1666.2 432.2 L1666.3 431.1 L1666.4 429.1 L1666.6 426.6 L1666.7 425.0 L1666.8 422.4 L1666.9 420.8 L1667.0 420.7 L1667.1 417.5 L1667.2 416.6 L1667.3 413.4 L1667.4 412.7 L1667.6 410.4 L1667.7 409.0 L1667.8 406.6 L1667.9 404.2 L1668.0 403.0 L1668.1 401.0 L1668.2 398.9 L1668.3 398.6 L1668.4 395.7 L1668.6 394.2 L1668.7 393.7 L1668.8 391.6 L1668.9 390.0 L1669.0 388.2 L1669.1 384.4 L1669.2 383.0 L1669.3 380.6 L1669.4 380.4 L1669.6 378.6 L1669.7 376.0 L1669.8 374.3 L1669.9 372.7 L1671.3 374.3 L1672.7 375.6 L1674.1 375.5 L1675.5 378.3 L1676.9 378.1 L1678.3 379.7 L1679.2 381.6 L1680.1 382.0 L1681.0 383.3 L1682.0 387.0 L1682.9 388.0 L1683.8 389.5 L1684.8 389.3 L1685.7 390.9 L1686.6 393.6 L1687.0 394.5 L1687.3 396.4 L1687.6 398.5 L1688.0 400.4 L1688.3 401.3 L1688.6 403.8 L1689.0 406.5 L1689.3 407.1 L1689.6 410.6 L1690.0 411.6 L1690.3 413.8 L1690.6 414.4 L1691.0 416.6 L1691.3 419.1 L1691.6 420.0 L1692.0 420.9 L1692.3 424.8 L1692.6 426.5 L1693.0 427.0 L1693.3 428.1 L1693.6 432.0 L1694.0 433.2 L1694.3 433.5 L1694.6 435.8 L1695.0 438.2 L1695.4 439.1 L1695.7 442.7 L1696.1 443.0 L1696.5 446.7 L1696.8 448.2 L1697.2 448.3 L1697.6 451.7 L1698.0 452.8 L1698.3 455.6 L1698.7 457.7 L1699.1 458.1 L1699.4 459.5 L1699.8 463.5 L1700.2 464.0 L1700.6 466.1 L1700.8 469.0 L1701.1 470.2 L1701.4 472.1 L1701.7 474.1 L1702.0 475.3 L1702.3 476.6 L1702.6 477.4 L1702.9 480.8 L1703.2 481.9 L1703.4 483.9 L1703.7 486.8 L1704.0 486.5 L1704.3 489.9 L1704.6 489.8 L1704.9 493.3 L1705.2 495.3 L1705.5 495.7 L1705.7 498.2 L1706.0 501.1 L1706.3 502.0 L1706.6 503.6 L1706.9 504.6 L1707.2 505.9 L1707.5 508.4 L1707.8 510.3 L1708.1 511.6 L1708.3 513.6 L1708.6 514.9 L1708.9 517.7 L1709.2 516.4 L1709.5 514.6 L1709.8 511.6 L1710.1 509.9 L1710.4 508.8 L1710.7 506.9 L1710.9 506.4 L1711.2 503.1 L1711.5 501.1 L1711.8 500.9 L1712.1 497.2 L1712.4 496.5 L1712.7 494.1 L1713.0 493.6 L1713.2 491.1 L1713.5 489.9 L1713.8 486.6 L1714.1 486.1 L1714.4 484.1 L1714.7 482.0 L1715.0 481.0 L1715.3 479.4 L1715.6 475.8 L1715.8 474.4 L1716.1 472.8 L1716.4 470.7 L1716.7 468.5 L1717.0 467.3 L1717.3 466.1 L1717.5 463.5 L1717.6 463.0 L1717.8 460.6 L1718.0 457.9 L1718.2 456.6 L1718.4 455.2 L1718.5 453.2 L1718.7 450.8 L1718.9 448.8 L1719.1 446.8 L1719.3 447.6 L1719.4 445.2 L1719.6 441.6 L1719.8 441.5 L1720.0 440.4 L1720.2 437.5 L1720.3 434.5 L1720.5 433.7 L1720.7 431.8 L1720.9 429.3 L1721.1 428.4 L1721.2 425.3 L1721.4 425.8 L1721.6 423.3 L1721.8 421.5 L1722.0 420.5 L1722.1 417.9 L1722.3 415.1 L1722.5 413.3 L1722.7 411.2 L1722.9 410.3 L1723.1 407.3 L1723.3 407.4 L1723.6 405.8 L1723.8 402.5 L1724.1 400.4 L1724.3 399.8 L1724.6 398.5 L1724.8 396.9 L1725.0 393.1 L1725.3 392.9 L1725.5 391.2 L1725.8 389.2 L1726.0 386.3 L1726.3 384.1 L1726.5 383.9 L1726.7 380.8 L1727.0 379.1 L1727.2 377.8 L1727.5 375.5 L1727.7 374.9 L1727.9 371.5 L1728.2 369.2 L1728.4 368.5 L1729.8 370.1 L1731.2 371.7 L1732.6 373.5 L1734.0 374.1 L1734.8 376.3 L1735.7 378.5 L1736.5 380.3 L1737.4 380.8 L1738.2 382.5 L1739.0 383.3 L1739.9 385.3 L1740.7 387.7 L1741.5 388.1 L1742.4 390.8 L1742.6 393.1 L1742.8 393.5 L1743.0 396.1 L1743.2 399.2 L1743.4 398.7 L1743.6 400.4 L1743.8 403.2 L1744.0 404.4 L1744.2 407.5 L1744.4 407.5 L1744.6 411.4 L1744.8 413.3 L1745.0 414.9 L1745.2 415.7 L1745.4 417.2 L1745.6 419.9 L1745.8 421.3 L1746.0 422.9 L1746.2 424.5 L1746.4 426.5 L1746.6 428.9 L1746.7 431.1 L1746.9 433.1 L1747.1 433.0 L1747.3 435.1 L1747.5 437.3 L1747.7 439.4 L1747.9 441.0 L1749.3 439.2 L1750.7 438.2 L1752.6 437.9 L1754.4 437.8 L1756.2 438.1 L1758.0 438.2 L1759.9 438.7 L1761.7 438.6 L1763.5 438.6 L1765.3 438.7 L1767.2 438.6 L1769.0 438.3 L1770.8 438.5 L1772.7 437.8 L1774.5 438.4 L1776.3 438.3 L1778.1 438.0 L1780.0 438.3 L1781.8 438.6 L1783.6 438.2 L1785.4 438.4 L1787.3 438.0 L1789.1 438.1 L1790.9 438.6 L1792.7 437.8 L1794.6 437.9 L1796.4 438.4 L1798.2 438.2 L1800.1 437.8 L1801.9 438.4 L1803.7 438.1 L1805.5 438.3 L1807.4 438.1 L1809.2 438.3 L1811.0 438.3 L1812.8 438.1 L1814.7 437.9 L1816.5 437.9 L1818.3 438.6 L1820.1 438.3 L1822.0 437.9 L1823.8 438.6 L1825.6 438.0 L1827.5 437.9 L1829.3 438.3 L1831.1 438.0 L1832.9 438.2 L1834.8 438.3 L1836.6 438.2" fill="none" stroke="#2a3a8c" stroke-width="1.6" stroke-linejoin="round"/>
</svg>
<div class="t" style="left:98.70px;transform:translateX(-50%);top:563.59px;font-size:11.82px;font-weight:400;color:#333333;">0:00</div>
<div class="t" style="left:233.30px;transform:translateX(-50%);top:254.79px;font-size:11.82px;font-weight:400;color:#666666;">0:10</div>
<div class="t" style="left:233.30px;transform:translateX(-50%);top:563.59px;font-size:11.82px;font-weight:400;color:#333333;">0:10</div>
<div class="t" style="left:367.90px;transform:translateX(-50%);top:254.79px;font-size:11.82px;font-weight:400;color:#666666;">0:20</div>
<div class="t" style="left:367.90px;transform:translateX(-50%);top:563.59px;font-size:11.82px;font-weight:400;color:#333333;">0:20</div>
<div class="t" style="left:502.50px;transform:translateX(-50%);top:254.79px;font-size:11.82px;font-weight:400;color:#666666;">0:30</div>
<div class="t" style="left:502.50px;transform:translateX(-50%);top:563.59px;font-size:11.82px;font-weight:400;color:#333333;">0:30</div>
<div class="t" style="left:637.10px;transform:translateX(-50%);top:254.79px;font-size:11.82px;font-weight:400;color:#666666;">0:40</div>
<div class="t" style="left:637.10px;transform:translateX(-50%);top:563.59px;font-size:11.82px;font-weight:400;color:#333333;">0:40</div>
<div class="t" style="left:771.70px;transform:translateX(-50%);top:254.79px;font-size:11.82px;font-weight:400;color:#666666;">0:50</div>
<div class="t" style="left:771.70px;transform:translateX(-50%);top:563.59px;font-size:11.82px;font-weight:400;color:#333333;">0:50</div>
<div class="t" style="left:906.30px;transform:translateX(-50%);top:254.79px;font-size:11.82px;font-weight:400;color:#666666;">1:00</div>
<div class="t" style="left:906.30px;transform:translateX(-50%);top:563.59px;font-size:11.82px;font-weight:400;color:#333333;">1:00</div>
<div class="t" style="left:1040.90px;transform:translateX(-50%);top:254.79px;font-size:11.82px;font-weight:400;color:#666666;">1:10</div>
<div class="t" style="left:1040.90px;transform:translateX(-50%);top:563.59px;font-size:11.82px;font-weight:400;color:#333333;">1:10</div>
<div class="t" style="left:1175.50px;transform:translateX(-50%);top:254.79px;font-size:11.82px;font-weight:400;color:#666666;">1:20</div>
<div class="t" style="left:1175.50px;transform:translateX(-50%);top:563.59px;font-size:11.82px;font-weight:400;color:#333333;">1:20</div>
<div class="t" style="left:1310.10px;transform:translateX(-50%);top:254.79px;font-size:11.82px;font-weight:400;color:#666666;">1:30</div>
<div class="t" style="left:1310.10px;transform:translateX(-50%);top:563.59px;font-size:11.82px;font-weight:400;color:#333333;">1:30</div>
<div class="t" style="left:1444.70px;transform:translateX(-50%);top:254.79px;font-size:11.82px;font-weight:400;color:#666666;">1:40</div>
<div class="t" style="left:1444.70px;transform:translateX(-50%);top:563.59px;font-size:11.82px;font-weight:400;color:#333333;">1:40</div>
<div class="t" style="left:1579.30px;transform:translateX(-50%);top:254.79px;font-size:11.82px;font-weight:400;color:#666666;">1:50</div>
<div class="t" style="left:1579.30px;transform:translateX(-50%);top:563.59px;font-size:11.82px;font-weight:400;color:#333333;">1:50</div>
<div class="t" style="left:1713.90px;transform:translateX(-50%);top:254.79px;font-size:11.82px;font-weight:400;color:#666666;">2:00</div>
<div class="t" style="left:1713.90px;transform:translateX(-50%);top:563.59px;font-size:11.82px;font-weight:400;color:#333333;">2:00</div>
<div class="t" style="right:1831.80px;top:547.26px;font-size:12.1px;font-weight:700;color:#7e1f46;">0</div>
<div class="t" style="right:1831.80px;top:514.69px;font-size:12.1px;font-weight:700;color:#7e1f46;">5</div>
<div class="t" style="right:1831.80px;top:482.11px;font-size:12.1px;font-weight:700;color:#7e1f46;">10</div>
<div class="t" style="right:1831.80px;top:449.54px;font-size:12.1px;font-weight:700;color:#7e1f46;">15</div>
<div class="t" style="right:1831.80px;top:416.97px;font-size:12.1px;font-weight:700;color:#7e1f46;">20</div>
<div class="t" style="right:1831.80px;top:384.40px;font-size:12.1px;font-weight:700;color:#7e1f46;">25</div>
<div class="t" style="right:1831.80px;top:351.83px;font-size:12.1px;font-weight:700;color:#7e1f46;">30</div>
<div class="t" style="right:1831.80px;top:319.26px;font-size:12.1px;font-weight:700;color:#7e1f46;">35</div>
<div class="t" style="left:1845.30px;top:319.26px;font-size:12.1px;font-weight:700;color:#1f2b5e;">1</div>
<div class="t" style="left:1845.30px;top:376.26px;font-size:12.1px;font-weight:700;color:#1f2b5e;">0.5</div>
<div class="t" style="left:1845.30px;top:433.26px;font-size:12.1px;font-weight:700;color:#1f2b5e;">0</div>
<div class="t" style="left:1845.30px;top:490.26px;font-size:12.1px;font-weight:700;color:#1f2b5e;">-0.5</div>
<div class="t" style="left:1845.30px;top:547.26px;font-size:12.1px;font-weight:700;color:#1f2b5e;">-1</div>
<div class="t" style="left:58.4px;top:440.1px;font-size:12.13px;font-weight:700;color:#7e1f46;transform:translate(-50%,-50%) rotate(-90deg);">PCO2 (Hgmm)</div>
<div class="t" style="left:1886.7px;top:436.6px;font-size:11.54px;font-weight:700;color:#1f2b5e;transform:translate(-50%,-50%) rotate(90deg);">Flow (L/sec)</div>
<div style="position:absolute;left:17.2px;top:269.4px;width:55.599999999999994px;height:23.100000000000023px;background:#a9d0fb;border-radius:3px;"></div>
<div class="t" style="left:26.00px;top:275.18px;font-size:13.49px;font-weight:400;color:#ffffff;">Export</div>
<div class="t" style="left:967.00px;transform:translateX(-50%);top:587.91px;font-size:12.63px;font-weight:400;color:#333333;">Time</div>
<div style="position:absolute;left:827.5px;top:618.4px;width:18.5px;height:2.0px;background:#c2305f;"></div>
<div class="t" style="left:850.00px;top:613.64px;font-size:12.95px;font-weight:400;color:#333333;">Main Stream</div>
<div style="position:absolute;left:983.4px;top:618.4px;width:18.200000000000045px;height:2.0px;background:#3a47a0;"></div>
<div class="t" style="left:1006.00px;top:614.21px;font-size:12.27px;font-weight:400;color:#333333;">Flow</div>
<svg style="position:absolute;left:14px;top:630px" width="50" height="18" viewBox="14 630 50 18">
<path d="M17 644h43M22.5 644l5-6.5c1.7-2.2 3.4-3.4 5-3.4s3 1.3 4.5 3.2l2.5 3.2 2.2-2.3c1.2-1.2 2.5-1.2 3.7 0l5.6 5.8" fill="none" stroke="#bcbcbc" stroke-width="1.4"/>
<path d="M28 644l4-4.5 3 3" fill="none" stroke="#bcbcbc" stroke-width="1"/>
</svg>
<div class="t" style="left:54.60px;top:663.01px;font-size:15.35px;font-weight:400;color:#333333;">Average</div>
<div style="position:absolute;left:15px;top:703.3px;width:135.4px;height:30.200000000000045px;background:#ffffff;border:1px solid #ced4da;border-radius:3px;box-sizing:border-box;"></div>
<div class="t" style="left:27.00px;top:714.35px;font-size:12.35px;font-weight:400;color:#495057;">V.2.6.0</div>
<div style="position:absolute;left:139px;top:717px;width:0;height:0;border-left:2.6px solid transparent;border-right:2.6px solid transparent;border-top:3.5px solid #888"></div>
<div style="position:absolute;left:42px;top:746px;width:82px;height:30.299999999999955px;background:#0b7bf7;border-radius:3px;"></div>
<div class="t" style="left:52.50px;top:756.76px;font-size:12.22px;font-weight:400;color:#ffffff;">Analysis</div>
<svg style="position:absolute;left:100px;top:754px" width="18" height="16" viewBox="100 754 18 16">
<path d="M102.5 762h9.5M108.3 757.3l4.7 4.7-4.7 4.7" fill="none" stroke="#fff" stroke-width="2.3" stroke-linecap="round" stroke-linejoin="round"/>
</svg>
<div style="position:absolute;left:180.8px;top:666.2px;width:1724.0px;height:27.59999999999991px;background:#ffeeba;"></div>
<div style="position:absolute;left:180.8px;top:693px;width:1724.0px;height:1.5px;background:#e8e0c6;"></div>
<div class="t" style="right:1602.30px;top:676.36px;font-size:12.33px;font-weight:700;color:#212529;">Jó ciklus/összes</div>
<svg style="position:absolute;left:324px;top:667px" width="12" height="11" viewBox="0 0 12 11"><path d="M3 10V2M1 4l2-2.3L5 4" fill="none" stroke="#444" stroke-width="1.1"/><path d="M8.5 1.5v8M6.5 7.5l2 2.3 2-2.3" fill="none" stroke="#c4bea6" stroke-width="1.1"/></svg>
<div class="t" style="right:1486.20px;top:676.13px;font-size:12.6px;font-weight:700;color:#212529;">S2T</div>
<svg style="position:absolute;left:441px;top:667px" width="12" height="11" viewBox="0 0 12 11"><path d="M3 10V2M1 4l2-2.3L5 4" fill="none" stroke="#c4bea6" stroke-width="1.1"/><path d="M8.5 1.5v8M6.5 7.5l2 2.3 2-2.3" fill="none" stroke="#c4bea6" stroke-width="1.1"/></svg>
<div class="t" style="right:1369.50px;top:676.13px;font-size:12.6px;font-weight:700;color:#212529;">S3T</div>
<svg style="position:absolute;left:557px;top:667px" width="12" height="11" viewBox="0 0 12 11"><path d="M3 10V2M1 4l2-2.3L5 4" fill="none" stroke="#c4bea6" stroke-width="1.1"/><path d="M8.5 1.5v8M6.5 7.5l2 2.3 2-2.3" fill="none" stroke="#c4bea6" stroke-width="1.1"/></svg>
<div class="t" style="right:1219.50px;top:676.13px;font-size:12.6px;font-weight:700;color:#212529;">Alpha Angle</div>
<svg style="position:absolute;left:705.6px;top:667px" width="12" height="11" viewBox="0 0 12 11"><path d="M3 10V2M1 4l2-2.3L5 4" fill="none" stroke="#c4bea6" stroke-width="1.1"/><path d="M8.5 1.5v8M6.5 7.5l2 2.3 2-2.3" fill="none" stroke="#c4bea6" stroke-width="1.1"/></svg>
<div class="t" style="right:1085.60px;top:676.13px;font-size:12.6px;font-weight:700;color:#212529;">Sn2T</div>
<svg style="position:absolute;left:840.6px;top:667px" width="12" height="11" viewBox="0 0 12 11"><path d="M3 10V2M1 4l2-2.3L5 4" fill="none" stroke="#c4bea6" stroke-width="1.1"/><path d="M8.5 1.5v8M6.5 7.5l2 2.3 2-2.3" fill="none" stroke="#c4bea6" stroke-width="1.1"/></svg>
<div class="t" style="right:950.60px;top:676.13px;font-size:12.6px;font-weight:700;color:#212529;">Sn3T</div>
<svg style="position:absolute;left:977.5px;top:667px" width="12" height="11" viewBox="0 0 12 11"><path d="M3 10V2M1 4l2-2.3L5 4" fill="none" stroke="#c4bea6" stroke-width="1.1"/><path d="M8.5 1.5v8M6.5 7.5l2 2.3 2-2.3" fill="none" stroke="#c4bea6" stroke-width="1.1"/></svg>
<div class="t" style="right:800.60px;top:676.13px;font-size:12.6px;font-weight:700;color:#212529;">Sn3T/Sn2T</div>
<svg style="position:absolute;left:1126.6px;top:667px" width="12" height="11" viewBox="0 0 12 11"><path d="M3 10V2M1 4l2-2.3L5 4" fill="none" stroke="#c4bea6" stroke-width="1.1"/><path d="M8.5 1.5v8M6.5 7.5l2 2.3 2-2.3" fill="none" stroke="#c4bea6" stroke-width="1.1"/></svg>
<div class="t" style="right:667.50px;top:676.13px;font-size:12.6px;font-weight:700;color:#212529;">Area ratio</div>
<svg style="position:absolute;left:1259px;top:667px" width="12" height="11" viewBox="0 0 12 11"><path d="M3 10V2M1 4l2-2.3L5 4" fill="none" stroke="#c4bea6" stroke-width="1.1"/><path d="M8.5 1.5v8M6.5 7.5l2 2.3 2-2.3" fill="none" stroke="#c4bea6" stroke-width="1.1"/></svg>
<div class="t" style="right:506.30px;top:676.13px;font-size:12.6px;font-weight:700;color:#212529;">D2Min</div>
<svg style="position:absolute;left:1420px;top:667px" width="12" height="11" viewBox="0 0 12 11"><path d="M3 10V2M1 4l2-2.3L5 4" fill="none" stroke="#c4bea6" stroke-width="1.1"/><path d="M8.5 1.5v8M6.5 7.5l2 2.3 2-2.3" fill="none" stroke="#c4bea6" stroke-width="1.1"/></svg>
<div class="t" style="right:339.70px;top:676.13px;font-size:12.6px;font-weight:700;color:#212529;">D2Max</div>
<svg style="position:absolute;left:1586.4px;top:667px" width="12" height="11" viewBox="0 0 12 11"><path d="M3 10V2M1 4l2-2.3L5 4" fill="none" stroke="#c4bea6" stroke-width="1.1"/><path d="M8.5 1.5v8M6.5 7.5l2 2.3 2-2.3" fill="none" stroke="#c4bea6" stroke-width="1.1"/></svg>
<div class="t" style="right:227.00px;top:676.13px;font-size:12.6px;font-weight:700;color:#212529;">ETCO2</div>
<svg style="position:absolute;left:1745.6px;top:667px" width="12" height="11" viewBox="0 0 12 11"><path d="M3 10V2M1 4l2-2.3L5 4" fill="none" stroke="#c4bea6" stroke-width="1.1"/><path d="M8.5 1.5v8M6.5 7.5l2 2.3 2-2.3" fill="none" stroke="#c4bea6" stroke-width="1.1"/></svg>
<div class="t" style="right:66.00px;top:676.19px;font-size:12.53px;font-weight:700;color:#212529;">Resp. rate</div>
<svg style="position:absolute;left:1887px;top:667px" width="12" height="11" viewBox="0 0 12 11"><path d="M3 10V2M1 4l2-2.3L5 4" fill="none" stroke="#c4bea6" stroke-width="1.1"/><path d="M8.5 1.5v8M6.5 7.5l2 2.3 2-2.3" fill="none" stroke="#c4bea6" stroke-width="1.1"/></svg>
<div class="t" style="right:1581.50px;top:702.82px;font-size:12.5px;font-weight:400;color:#333333;">23/27</div>
<div class="t" style="right:1465.40px;top:702.82px;font-size:12.5px;font-weight:400;color:#333333;">59,32</div>
<div class="t" style="right:1348.40px;top:702.82px;font-size:12.5px;font-weight:400;color:#333333;">5,18</div>
<div class="t" style="right:1199.70px;top:702.82px;font-size:12.5px;font-weight:400;color:#333333;">127,45</div>
<div class="t" style="right:1064.40px;top:702.82px;font-size:12.5px;font-weight:400;color:#333333;">2,10</div>
<div class="t" style="right:929.40px;top:702.82px;font-size:12.5px;font-weight:400;color:#333333;">0,19</div>
<div class="t" style="right:779.40px;top:702.82px;font-size:12.5px;font-weight:400;color:#333333;">69,72</div>
<div class="t" style="right:647.20px;top:702.82px;font-size:12.5px;font-weight:400;color:#333333;">77,39</div>
<div class="t" style="right:485.40px;top:702.82px;font-size:12.5px;font-weight:400;color:#333333;">-103,84</div>
<div class="t" style="right:319.70px;top:702.82px;font-size:12.5px;font-weight:400;color:#333333;">120,25</div>
<div class="t" style="right:221.20px;top:702.82px;font-size:12.5px;font-weight:400;color:#333333;">28,17</div>
<div class="t" style="right:71.70px;top:702.82px;font-size:12.5px;font-weight:400;color:#333333;">16,65</div>
<svg style="position:absolute;left:0;top:780px" width="1920" height="117" viewBox="0 780 1920 117">
<defs><linearGradient id="fg" x1="0" y1="0" x2="1" y2="0"><stop offset="0" stop-color="#0a1430"/><stop offset="0.3" stop-color="#0b1a48"/><stop offset="0.65" stop-color="#0c1f5c"/><stop offset="1" stop-color="#0f2670"/></linearGradient></defs>
<rect x="0" y="780" width="1920" height="117" fill="url(#fg)"/><line x1="94" y1="780" x2="94" y2="897" stroke="#1a2c66" stroke-width="1"/><line x1="194" y1="780" x2="194" y2="897" stroke="#1a2c66" stroke-width="1"/><line x1="294" y1="780" x2="294" y2="897" stroke="#2b4189" stroke-width="2"/><line x1="394" y1="780" x2="394" y2="897" stroke="#1a2c66" stroke-width="1"/><line x1="494" y1="780" x2="494" y2="897" stroke="#1a2c66" stroke-width="1"/><line x1="594" y1="780" x2="594" y2="897" stroke="#2b4189" stroke-width="2"/><line x1="694" y1="780" x2="694" y2="897" stroke="#1a2c66" stroke-width="1"/><line x1="794" y1="780" x2="794" y2="897" stroke="#1a2c66" stroke-width="1"/><line x1="894" y1="780" x2="894" y2="897" stroke="#2b4189" stroke-width="2"/><line x1="994" y1="780" x2="994" y2="897" stroke="#1a2c66" stroke-width="1"/><line x1="1094" y1="780" x2="1094" y2="897" stroke="#1a2c66" stroke-width="1"/><line x1="1194" y1="780" x2="1194" y2="897" stroke="#2b4189" stroke-width="2"/><line x1="1294" y1="780" x2="1294" y2="897" stroke="#1a2c66" stroke-width="1"/><line x1="1394" y1="780" x2="1394" y2="897" stroke="#1a2c66" stroke-width="1"/><line x1="1494" y1="780" x2="1494" y2="897" stroke="#2b4189" stroke-width="2"/><line x1="1594" y1="780" x2="1594" y2="897" stroke="#1a2c66" stroke-width="1"/><line x1="1694" y1="780" x2="1694" y2="897" stroke="#1a2c66" stroke-width="1"/><line x1="1794" y1="780" x2="1794" y2="897" stroke="#2b4189" stroke-width="2"/><line x1="1894" y1="780" x2="1894" y2="897" stroke="#1a2c66" stroke-width="1"/><line x1="0" y1="846.3" x2="1920" y2="846.3" stroke="#1c2e6a" stroke-width="1"/>
<path d="M630 780C634 796 646 804 659 806L657 826C657 833 663 835 668 831L765 780Z" fill="#11266a" opacity="0.6"/>
<path d="M630 780C634 796 646 804 659 806" fill="none" stroke="#1d3580" stroke-width="2"/>
<path d="M1260 780C1256 796 1244 802 1244 803L1245 826C1245 832 1239 834 1234 830L1135 780Z" fill="#11266a" opacity="0.6"/>
<path d="M1260 780C1256 796 1246 802 1244 803" fill="none" stroke="#1d3580" stroke-width="2"/>
<path d="M663 828L757 782" fill="none" stroke="#1a3383" stroke-width="9" stroke-linecap="round"/>
<path d="M1147 782L1241 826" fill="none" stroke="#1a3383" stroke-width="9" stroke-linecap="round"/>
</svg>
</body></html>
